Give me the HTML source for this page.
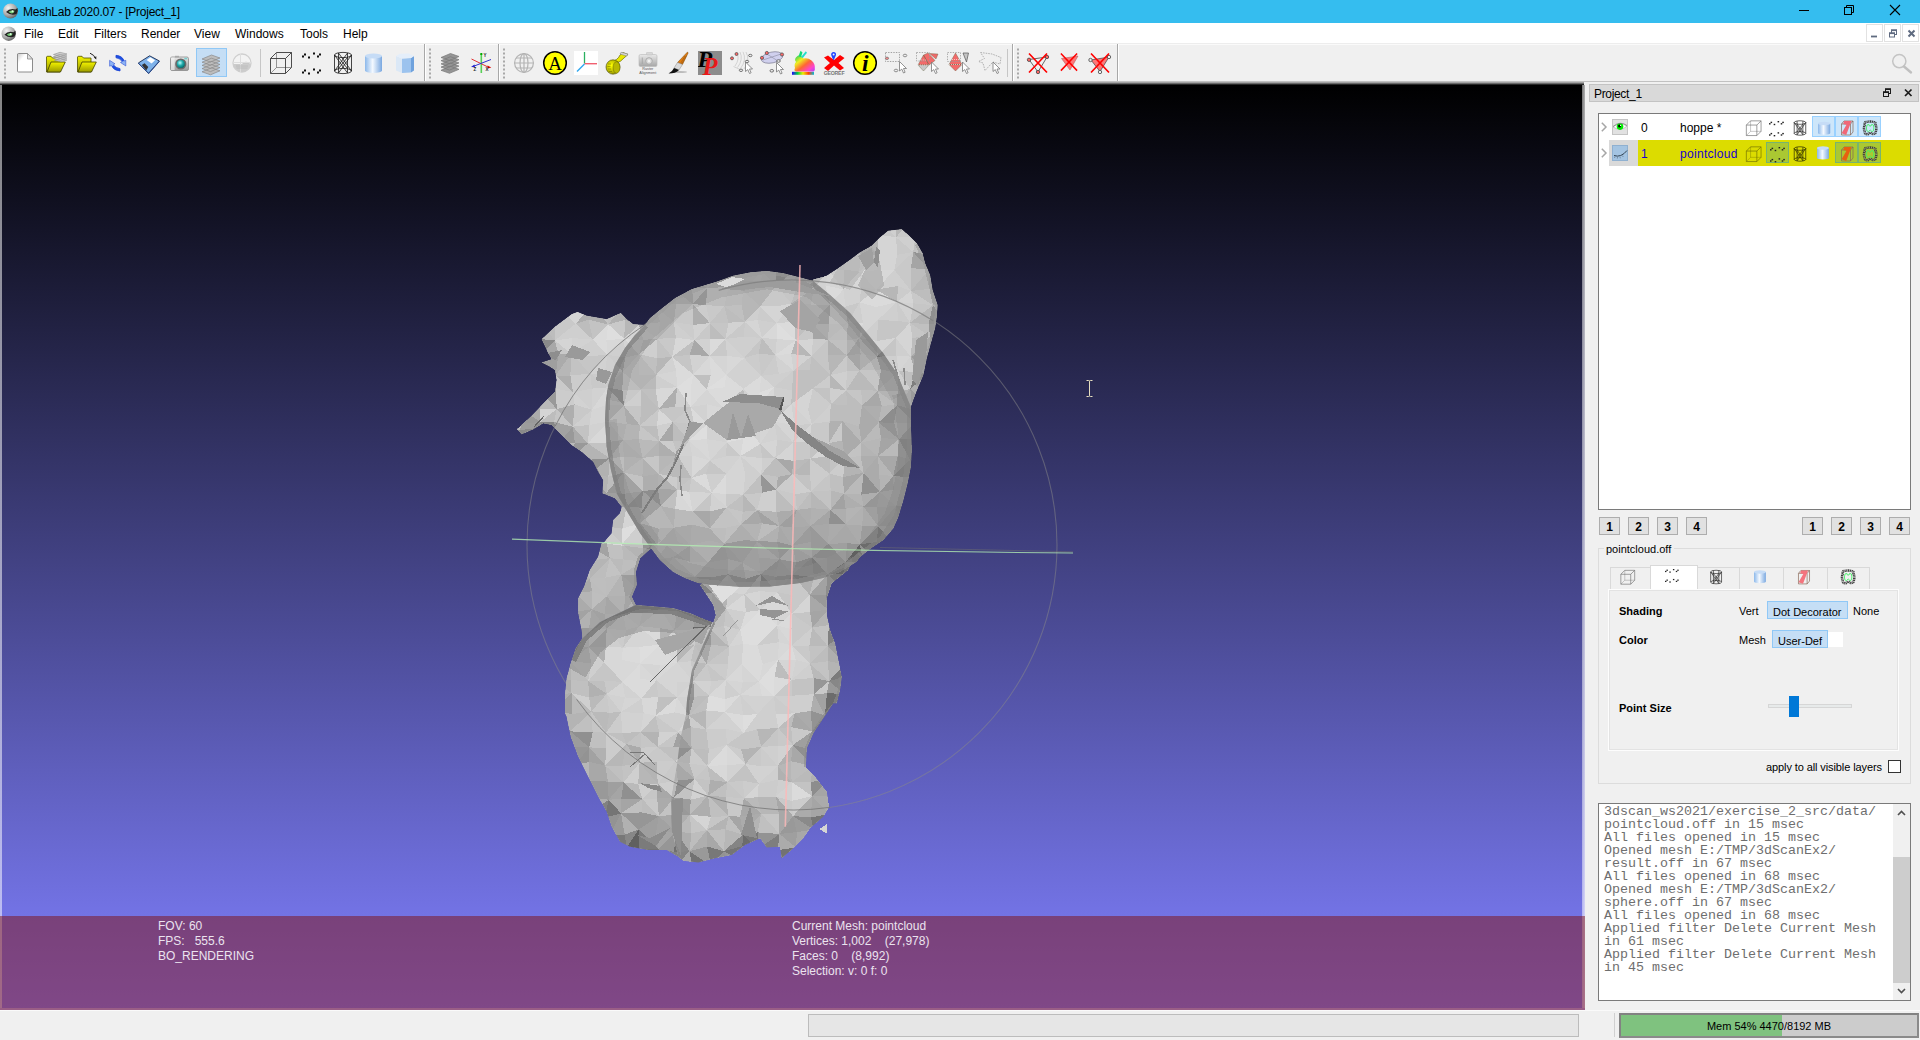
<!DOCTYPE html>
<html>
<head>
<meta charset="utf-8">
<title>MeshLab 2020.07 - [Project_1]</title>
<style>
*{box-sizing:border-box;margin:0;padding:0}
html,body{width:1920px;height:1040px;overflow:hidden;background:#f0f0f0;font-family:"Liberation Sans",sans-serif;font-size:12px;color:#000}
.abs{position:absolute}
#titlebar{position:absolute;left:0;top:0;width:1920px;height:23px;background:#35bdef}
#titlebar .t{position:absolute;left:23px;top:5px;font-size:12px;line-height:15px;white-space:nowrap;letter-spacing:-0.25px}
#menubar{position:absolute;left:0;top:23px;width:1920px;height:21px;background:#fff;border-bottom:1px solid #ededed}
#menubar span{position:absolute;top:4px;font-size:12px;line-height:15px;white-space:nowrap}
#toolbar{position:absolute;left:0;top:44px;width:1920px;height:38px;background:#f0f0f0;border-top:1px solid #fafafa}
#tbshadow{position:absolute;left:0;top:81px;width:1920px;height:4px;background:linear-gradient(#d0d0d0,#a0a0a0 40%,#404040 80%,#000)}
#viewport{position:absolute;left:2px;top:85px;width:1580px;height:925px;background:linear-gradient(#000000,#8080ff);overflow:hidden}
#info{position:absolute;left:0;top:831px;width:1580px;height:94px;background:rgba(128,16,16,0.5)}
#info div{position:absolute;white-space:nowrap;font-size:12px;line-height:15px;color:#ebe3ef}
#vpleft{position:absolute;left:0;top:85px;width:2px;height:925px;background:linear-gradient(rgba(255,255,255,.52),rgba(255,255,255,.52)),linear-gradient(#000,#8080ff)}
.vpov{position:absolute;left:0;top:831px;width:100%;height:94px;background:rgba(128,16,16,.5)}
#vpbot{position:absolute;left:0;top:1008px;width:1585px;height:2px;background:#9a5e86}
#vpright{position:absolute;left:1582px;top:85px;width:3px;height:925px;background:linear-gradient(90deg,rgba(255,255,255,.45),rgba(255,255,255,.7)),linear-gradient(#000,#8080ff)}
#rightbg{position:absolute;left:1584px;top:82px;width:336px;height:958px;background:#f0f0f0}
#status{position:absolute;left:0;top:1010px;border-top:1px solid #fafafa;width:1920px;height:30px;background:#f0f0f0}
</style>
</head>
<body>
<div id="titlebar"><div class="t">MeshLab 2020.07 - [Project_1]</div></div>
<div id="menubar">
<span style="left:24px">File</span><span style="left:58px">Edit</span><span style="left:94px">Filters</span><span style="left:141px">Render</span><span style="left:194px">View</span><span style="left:235px">Windows</span><span style="left:300px">Tools</span><span style="left:343px">Help</span>
</div>
<div id="toolbar"><!--TOOLBAR-->
<svg id="tbsvg" width="1920" height="38" viewBox="0 44 1920 38" style="position:absolute;left:0;top:-1px;overflow:visible">
<defs>
<linearGradient id="gFold" x1="0" y1="0" x2="0" y2="1"><stop offset="0" stop-color="#f4f400"/><stop offset="1" stop-color="#9a9a00"/></linearGradient>
<linearGradient id="gCyl" x1="0" y1="0" x2="1" y2="0"><stop offset="0" stop-color="#8cb8ea"/><stop offset=".45" stop-color="#f4f9ff"/><stop offset="1" stop-color="#7aa8e0"/></linearGradient>
<linearGradient id="gCam" x1="0" y1="0" x2="0" y2="1"><stop offset="0" stop-color="#e8e8e8"/><stop offset="1" stop-color="#9a9a9a"/></linearGradient>
<linearGradient id="gPage" x1="0" y1="0" x2="1" y2="1"><stop offset="0" stop-color="#c8c8c8"/><stop offset=".3" stop-color="#fff"/></linearGradient>
<linearGradient id="gRain" x1="0" y1="0" x2="1" y2="0"><stop offset="0" stop-color="#20f"/><stop offset=".25" stop-color="#0c4"/><stop offset=".5" stop-color="#ee0"/><stop offset=".75" stop-color="#f40"/><stop offset="1" stop-color="#0bd"/></linearGradient>
<linearGradient id="gBun" x1="0" y1="0" x2="1" y2="1"><stop offset="0" stop-color="#0c6"/><stop offset=".3" stop-color="#ee2"/><stop offset=".55" stop-color="#f63"/><stop offset=".8" stop-color="#f4c"/><stop offset="1" stop-color="#a4f"/></linearGradient>
<radialGradient id="gLens" cx=".4" cy=".35" r=".7"><stop offset="0" stop-color="#bff"/><stop offset=".5" stop-color="#2aa"/><stop offset="1" stop-color="#066"/></radialGradient>
<radialGradient id="gTape" cx=".4" cy=".4" r=".7"><stop offset="0" stop-color="#ff0"/><stop offset="1" stop-color="#8a8a00"/></radialGradient>
<g id="handle" fill="#a8a8a8"><rect x="0" y="0" width="2" height="2"/><rect x="0" y="4" width="2" height="2"/><rect x="0" y="8" width="2" height="2"/><rect x="0" y="12" width="2" height="2"/><rect x="0" y="16" width="2" height="2"/><rect x="0" y="20" width="2" height="2"/><rect x="0" y="24" width="2" height="2"/><rect x="0" y="28" width="2" height="2"/></g>
<g id="cursor"><path d="M0 0L0 9.5L2.3 7.6L4 11.5L5.6 10.8L4 7L7 7Z" fill="#fff" stroke="#777" stroke-width=".8"/></g>
<g id="icCube" fill="none" stroke-width=".9"><path d="M0.5 6.5H15.5V21.5H0.5Z M0.5 6.5L6.5 0.5H21.5L15.5 6.5 M21.5 0.5V15.5L15.5 21.5"/><path d="M6.5 0.5V15.5H21.5 M6.5 15.5L0.5 21.5" stroke-opacity=".55"/></g>
<g id="icDots"><rect x="2" y="1" width="2" height="2"/><rect x="0" y="3" width="2" height="2"/><rect x="6" y="4" width="2" height="2"/><rect x="11" y="0" width="2" height="2"/><rect x="15" y="3" width="2" height="2"/><rect x="17" y="1" width="2" height="2"/><rect x="2" y="17" width="2" height="2"/><rect x="0" y="19" width="2" height="2"/><rect x="6" y="20" width="2" height="2"/><rect x="11" y="16" width="2" height="2"/><rect x="15" y="19" width="2" height="2"/><rect x="17" y="17" width="2" height="2"/></g>
<g id="icWire" fill="none" stroke-width=".8"><ellipse cx="9" cy="3" rx="8.5" ry="2.6"/><ellipse cx="9" cy="19" rx="8.5" ry="2.6"/><path d="M0.5 3V19M17.5 3V19M4.500 1V21M13.500 1V21M0.5 3L13.500 21M17.5 3L4.500 21M4.500 1L17.5 19M13.500 1L0.5 19M4.500 5.4L13.500 16.6M13.500 5.4L4.500 16.6"/></g>
<g id="icCyl"><path d="M0 3V17.5A8.5 2.5 0 0 0 17 17.5V3Z" fill="url(#gCyl)"/><ellipse cx="8.5" cy="3" rx="8.5" ry="2.5" fill="#c6dcf6"/></g>
<g id="icFlat"><path d="M0 3V17.5L6 20V5.5Z" fill="#dbe8f6"/><path d="M6 5.5V20L15 19.5V5Z" fill="#9cc3ee"/><path d="M15 5V19.5L18 17.5V3Z" fill="#6fa2dd"/><path d="M0 3L4 .8L13 .5L18 3L15 5L6 5.5Z" fill="#e4eefa"/></g>
<g id="icLayers"><path d="M0 4L9.5 0L18 3L8.5 7Z M0 7.2L9.5 3.2L18 6.2L8.5 10.2Z M0 10.4L9.5 6.4L18 9.4L8.5 13.4Z M0 13.6L9.5 9.6L18 12.6L8.5 16.6Z M0 16.8L9.5 12.8L18 15.8L8.5 19.8Z" stroke-width=".7"/></g>
<g id="icGlobe" fill="none" stroke-width="1.2"><circle cx="10" cy="10" r="9.4"/><ellipse cx="10" cy="10" rx="4" ry="9.4"/><path d="M.6 10H19.4M10 .6V19.4M2 5H18M2 15H18"/></g>
<g id="delX" stroke="#f00" stroke-width="1.7" fill="none"><path d="M1 0L19 19M19 0L1 19"/></g>
</defs>
<!-- handles & separators -->
<use href="#handle" x="4" y="48.5"/><use href="#handle" x="429" y="48.5"/><use href="#handle" x="503" y="48.5"/><use href="#handle" x="1017" y="48.5"/>
<g stroke="#c6c6c6" stroke-width="1"><path d="M260.5 49V77M1007.5 49V77"/></g>
<g stroke="#a8a8a8" stroke-width="1"><path d="M424.5 44V81M498.5 44V81M1012.5 44V81M1117.5 44V81"/></g>
<g stroke="#fff" stroke-width="1"><path d="M425.5 44V81M499.5 44V81M1013.5 44V81M1118.5 44V81"/></g>
<!-- 1 new -->
<path d="M17.5 54A1 1 0 0 1 18.5 53.5H27.5L32.5 59V71A1 1 0 0 1 31.5 72H18.5A1 1 0 0 1 17.5 71Z" fill="url(#gPage)" stroke="#8c8c8c"/><path d="M27.5 53.5V59H32.5Z" fill="#e4e4e4" stroke="#8c8c8c" stroke-width=".8"/>
<!-- 2 open+layers -->
<g id="folder"><path d="M46.5 57A1 1 0 0 1 47.5 56.3H51L52.5 58H60V72H46.5Z" fill="url(#gFold)" stroke="#505000" stroke-width=".8"/><path d="M47 72L51 62H65.3L60.5 72Z" fill="url(#gFold)" stroke="#404000" stroke-width=".8"/></g>
<g fill="#d0d0d0" stroke="#909090" stroke-width=".6"><path d="M53.5 54.5L60 52.3L67 54L60.5 56.3Z M53.5 56.5L60 54.3L67 56L60.5 58.3Z M53.5 58.5L60 56.3L67 58L60.5 60.3Z M54.5 60.3L60 58.5L67 60L61 61.7Z"/></g>
<!-- 3 open+arrow -->
<use href="#folder" x="31"/><path d="M90 53.2Q94.5 55 95.5 58.5" fill="none" stroke="#222" stroke-width="1"/><path d="M94 57.5L96.3 59.5L96.3 56.3Z" fill="#222"/>
<!-- 4 reload -->
<g stroke="#1a3fd0" stroke-width=".5"><path d="M116 55.5Q122 56 124 61L125.8 60.3V66L120.5 62.5L122 61.8Q120.5 58.5 116 57.8Z" fill="#8eb4f4"/><path d="M116 55.3Q122 55.6 124 60.5L122.4 61.3Q120.5 58 116 57.5Z" fill="#1e50e0"/><path d="M120 70.8Q113.5 70.3 111.5 65.5L109.6 66.2V60.3L115 63.8L113.4 64.6Q115 67.8 120 68.6Z" fill="#8eb4f4"/><path d="M120 71Q114 70.5 112 66.5L113.8 65.5Q115.5 68 120 68.8Z" fill="#1e50e0"/></g>
<!-- 5 save -->
<path d="M138.3 63L149.6 55.8L159.4 61L148.6 73.3Z" fill="#7eb2ea" stroke="#1a2a50" stroke-width=".9"/><path d="M146.6 60L150.3 57.3L155 60.2L151.6 63.5Z" fill="#fff"/><path d="M141.8 65L144.6 63.3L148.3 67L146.2 70.4Z" fill="#333"/><path d="M138.3 63.3L148.6 73.6L159.4 61.4" fill="none" stroke="#2a4a90" stroke-width="1"/>
<!-- 6 camera -->
<rect x="170.5" y="57" width="18" height="13.5" rx="1.6" fill="url(#gCam)" stroke="#8a8a8a" stroke-width=".8"/><rect x="171" y="57.5" width="3.6" height="12.5" fill="#f4f4f4" opacity=".7"/><rect x="175" y="55.8" width="4" height="1.6" fill="#aaa"/><rect x="184.3" y="57.8" width="3" height="1.6" fill="#7cc"/><circle cx="180.8" cy="64" r="5.6" fill="#6a6a6a"/><circle cx="180.8" cy="64" r="4" fill="url(#gLens)"/>
<!-- 7 layers highlighted -->
<rect x="196.5" y="48.5" width="30" height="28" fill="#c5def5" stroke="#90c8f6"/>
<use href="#icLayers" x="202" y="55" fill="#bdbdbd" stroke="#8a8a8a"/>
<!-- 8 globe faded -->
<g opacity=".75"><circle cx="242" cy="63" r="9" fill="#f4f4f4" stroke="#c4c4c4" stroke-width="1.3"/><path d="M233.5 64H250.5V66Q248 71.5 242 72Q236 71.5 233.5 66Z" fill="#c0c0c0"/><path d="M243 63Q246 60.5 249 63L250.5 64H242Z" fill="#bbb"/><path d="M240.5 54V72M233 62.5H251" stroke="#d8d8d8" stroke-width="1" fill="none"/><path d="M236 66H248M236.5 68H247.5" stroke="#a8a8a8" stroke-width=".8"/></g>
<!-- 9-13 render modes -->
<use href="#icCube" x="270" y="52" stroke="#3a3a3a"/>
<use href="#icDots" x="302" y="52.5" fill="#111"/>
<use href="#icWire" x="334" y="52" stroke="#1a1a1a"/>
<use href="#icCyl" x="365" y="53"/>
<use href="#icFlat" x="396" y="53"/>
<!-- 14 grey layers -->
<g opacity=".9"><use href="#icLayers" x="441" y="53.5" fill="#8c8c8c" stroke="#6a6a6a"/></g>
<!-- 15 axes -->
<path d="M481.3 54V73" stroke="#58d058" stroke-width="1.6"/><path d="M471.5 59L489 67.5" stroke="#e03030" stroke-width="1"/><path d="M491 59.5L473 66.5" stroke="#3030d0" stroke-width="1"/><path d="M487.5 65.5L491.3 67.5L488 68.5Z" fill="#d00"/><path d="M474.5 64.5L471 67L475 67.3Z" fill="#22c"/><rect x="480.3" y="53" width="2" height="2" fill="#0a0"/>
<g font-family="Liberation Sans" font-size="4.5" font-weight="bold" fill="#222"><text x="483.5" y="57">Y</text><text x="473.5" y="70.5">Z</text><text x="485.5" y="70.5">X</text></g>
<!-- 16 globe -->
<use href="#icGlobe" x="514" y="53" stroke="#b4b4b4"/>
<!-- 17 A -->
<circle cx="555" cy="63" r="11.3" fill="#ff0" stroke="#000" stroke-width="1.5"/><text x="555" y="69.6" font-family="Liberation Serif" font-size="19" text-anchor="middle" fill="#000">A</text>
<!-- 18 axes box -->
<rect x="574" y="51" width="24" height="24" fill="#fff"/><path d="M584.5 52V63.5" stroke="#2ab060" stroke-width="1.3"/><path d="M584.5 63.7H597" stroke="#f06070" stroke-width="1.4"/><path d="M584.5 64L577 71.5" stroke="#30a8f0" stroke-width="1.4"/>
<!-- 19 tape -->
<path d="M611 62Q618 60 620 55L623 52.5L628 54.5L624 58Q621 62 615 63.5Z" fill="#e8e800" stroke="#555500" stroke-width=".6"/><path d="M621 52.3L628 54L626.5 56L620 54Z" fill="#d8d8d8" stroke="#777" stroke-width=".5"/><ellipse cx="613" cy="67" rx="7" ry="7.2" fill="url(#gTape)" stroke="#444400" stroke-width=".6"/><ellipse cx="616.5" cy="67.5" rx="3.4" ry="5.8" fill="#b8b800" stroke="#666600" stroke-width=".5"/><path d="M608 64H611M607.5 66.5H610.5M608 69H611M609 71.5H612" stroke="#666600" stroke-width=".5"/>
<!-- 20 raster camera -->
<g opacity=".85"><rect x="639" y="54.5" width="18" height="12" rx="1.6" fill="url(#gCam)" stroke="#b0b0b0" stroke-width=".6"/><rect x="646.5" y="52.3" width="6" height="2.6" rx=".8" fill="#d4d4d4" stroke="#b4b4b4" stroke-width=".5"/><circle cx="649" cy="61" r="3.3" fill="#d8d8d8" stroke="#a0a0a0" stroke-width="1"/><circle cx="649" cy="61" r="1.2" fill="#f4f4f4"/><path d="M642.3 57.5V64" stroke="#999" stroke-width=".9"/></g>
<g font-family="Liberation Sans" font-size="3.8" fill="#555" text-anchor="middle"><text x="647.8" y="70">Raster</text><text x="647.8" y="74.2">Alignment</text></g>
<!-- 21 brush -->
<ellipse cx="680" cy="72" rx="7" ry="1.1" fill="#bbb"/><path d="M687.3 52.2Q688.3 52 688 53.2L682.5 64.5L677.5 62.5Z" fill="#e07c10" stroke="#7a4a10" stroke-width=".5"/><path d="M685 56L680.5 63.6M686.5 55.5L681.7 64" stroke="#8a5010" stroke-width=".5"/><path d="M677.5 62.5L682.5 64.5L679 70L674 68Z" fill="#dadada" stroke="#888" stroke-width=".5"/><path d="M674 68L679 70Q676 73.5 668.5 73.6Q672.5 71.5 674 68Z" fill="#111"/>
<!-- 22 PP -->
<clipPath id="cpPP"><rect x="698" y="51" width="24" height="24"/></clipPath><rect x="698" y="51" width="24" height="24" fill="#8c8c8c"/><g font-family="Liberation Serif" font-weight="bold" font-style="italic" clip-path="url(#cpPP)"><text x="697.500" y="67.3" font-size="24" fill="#000">P</text><text x="702.5" y="74.8" font-size="24.5" fill="#e81818">P</text></g>
<!-- 23 select vertex -->
<g fill="none" stroke="#c4c4c4" stroke-width=".7"><path d="M737 52.5Q740 59 735 66M740 52Q743.5 59.5 737.5 67.5M743 51.8Q747 60 740.5 68.5M746 52Q750.5 60 744 69M733.5 66.5Q737 68 740 69.5"/></g>
<g stroke="#555" stroke-width=".8"><circle cx="736.5" cy="54" r="1.5" fill="#f66"/><circle cx="732" cy="58.3" r="1.5" fill="#f66"/><ellipse cx="750.3" cy="55.5" rx="1.7" ry="1.2" fill="#eee"/><ellipse cx="747" cy="61.5" rx="1.7" ry="1.2" fill="#eee"/><ellipse cx="741" cy="70.3" rx="1.7" ry="1.2" fill="#eee"/></g>
<use href="#cursor" x="745.5" y="62"/>
<!-- 24 select connected -->
<ellipse cx="772" cy="57.5" rx="11" ry="5.4" transform="rotate(-12 772 57.5)" fill="#d0d0ee" stroke="#8a8aa0" stroke-width=".8"/><path d="M763 60L781 54M766 53.5L778 61" stroke="#8a8aa0" stroke-width=".6"/>
<g stroke="#555" stroke-width=".8"><circle cx="766.8" cy="53" r="1.6" fill="#f66"/><circle cx="762" cy="57.8" r="1.6" fill="#f66"/><circle cx="782" cy="54.5" r="1.6" fill="#f66"/><ellipse cx="778.5" cy="61" rx="1.8" ry="1.3" fill="#eee"/><ellipse cx="771.8" cy="70.8" rx="1.8" ry="1.3" fill="#eee"/></g>
<use href="#cursor" x="776.5" y="62.5"/>
<!-- 25 bunny -->
<rect x="792" y="71.8" width="22" height="3" fill="url(#gRain)"/><path d="M797.5 56Q799.5 54.500 801.500 56L803.500 58.500Q808 57.500 811.500 60.500Q815.500 64 814.800 68.500Q815.500 70.500 813.500 71.500H796Q793.500 71 795 68Q793.800 64.500 796 62Q793.500 59 797.500 56Z" fill="url(#gBun)"/><path d="M798.500 56.500L800.500 50.800L802.500 52.500L801 57Z" fill="#1d7"/><path d="M801 57L805.800 51.300L807 52.800L802.800 58Z" fill="#2dc"/>
<!-- 26 georef -->
<path d="M824 57.5L828 55.5L834 60L840 55L844.5 58L838.5 63L844 68L840 70.5L834 65.5L828 71L824 68L830 63Z" fill="#f00"/><path d="M833.5 52A2.4 2.4 0 0 1 836 55Q835 57.5 833.6 60.5Q832 57.5 831.2 55A2.4 2.4 0 0 1 833.5 52Z" fill="#24f"/><circle cx="833.6" cy="54.5" r="1" fill="#eef"/>
<text x="834" y="75.3" font-family="Liberation Sans" font-size="5.2" font-weight="bold" fill="#777" text-anchor="middle" letter-spacing="-.2">GEOREF</text>
<!-- 27 info -->
<circle cx="865" cy="63" r="11.3" fill="#ff0" stroke="#000" stroke-width="1.5"/><text x="865.3" y="71" font-family="Liberation Serif" font-size="23.5" font-weight="bold" font-style="italic" text-anchor="middle" fill="#000">i</text>
<!-- 28 select rect faded -->
<rect x="885.5" y="52.5" width="14" height="9" fill="none" stroke="#999" stroke-width=".9" stroke-dasharray="1.4 1.2"/><g stroke="#777" stroke-width=".8"><ellipse cx="887" cy="58.3" rx="1.6" ry="1.2" fill="#f88"/><ellipse cx="905" cy="55.5" rx="1.8" ry="1.3" fill="#eee"/><ellipse cx="896" cy="70.5" rx="1.8" ry="1.3" fill="#eee"/></g><use href="#cursor" x="899.5" y="61.5"/>
<!-- 29 select faces -->
<g stroke="#664" stroke-width=".4"><path d="M918 65L923.5 55L929 65Z M923.5 55L929 65L935 60.5L928 53Z" fill="#f26a6a"/><path d="M918 65L929 65L923.5 71Z" fill="#c8c8c8"/><path d="M929.5 53.5L938 54L936 59Z" fill="#ee6a6a"/><path d="M920.8 60H926.3M918 65H929" stroke="#fff" stroke-width=".6" stroke-dasharray="1 1"/></g><rect x="916.5" y="52.5" width="13" height="8.5" fill="none" stroke="#999" stroke-width=".8" stroke-dasharray="1.4 1.2"/><use href="#cursor" x="931.5" y="62"/>
<!-- 30 select faces 2 -->
<g stroke="#664" stroke-width=".4"><path d="M949 64.5L955.5 53L962 64.5Z M949 64.5L962 64.5L955.5 71Z" fill="#f26a6a"/><path d="M963 53L968.5 53L966.5 62Z" fill="#c4c4c4" stroke="#555" stroke-width=".7"/><path d="M952 59.5H959M949 64.5H962" stroke="#fff" stroke-width=".6" stroke-dasharray="1 1"/></g><rect x="947.5" y="52.5" width="13" height="9" fill="none" stroke="#999" stroke-width=".8" stroke-dasharray="1.4 1.2"/><use href="#cursor" x="962.5" y="62"/>
<!-- 31 polyline -->
<path d="M980.5 52.5L992 54L1001 57.5L1000 64L993 62L985 70.5L983 63L978.5 61.5L984.5 58.5Z" fill="none" stroke="#aaa" stroke-width=".9" stroke-dasharray="1.6 1"/><use href="#cursor" x="993" y="62"/>
<!-- delete icons -->
<path d="M1029 59.5L1047 57L1038 72Z" fill="none" stroke="#444" stroke-width=".8"/><g stroke="#444" stroke-width=".8" fill="#f66"><circle cx="1029" cy="59.8" r="1.7"/><circle cx="1047" cy="57" r="1.7"/><circle cx="1038" cy="72" r="1.7"/></g><use href="#delX" x="1028" y="53.5"/>
<path d="M1061.5 58.5L1078 56L1070 70Z" fill="#f77" stroke="#a55" stroke-width=".5"/><use href="#delX" x="1060" y="53.5" transform="translate(106 5.35) scale(.9)"/>
<path d="M1091 60L1109 57L1100 71.5Z" fill="#f77" stroke="#444" stroke-width=".7"/><g stroke="#444" stroke-width=".8" fill="#eee"><circle cx="1090.5" cy="60" r="1.7"/><circle cx="1109" cy="57" r="1.7"/><circle cx="1100" cy="72" r="1.7"/></g><use href="#delX" x="1090" y="53.5"/>
<!-- search -->
<circle cx="1899.3" cy="61.2" r="6.6" fill="none" stroke="#c4c4c4" stroke-width="1.5"/><path d="M1904 66.5L1911 72.5" stroke="#c0c0c0" stroke-width="2.4" stroke-linecap="round"/>
</svg>

<!--/TOOLBAR--></div>
<div id="tbshadow"></div>
<div id="rightbg"></div>
<div id="vpleft"><div class="vpov"></div></div><div id="vpright"><div class="vpov"></div></div>
<div id="viewport">
<!--MESH-->
<svg id="mesh" width="1580" height="924" viewBox="0 0 1580 924" style="position:absolute;left:0;top:0" shape-rendering="crispEdges">
<defs>
<clipPath id="c_lear"><path d="M643.0 240.0L631.3 239.2L624.7 234.2L618.8 228.0L604.7 234.2L584.7 230.8L575.5 227.0L569.7 229.2L553.0 241.7L539.7 254.2L546.3 268.3L549.7 274.2L539.7 277.5L548.0 281.7L553.0 285.0L554.7 295.0L553.0 306.7L543.0 316.7L529.7 330.8L514.7 344.2L519.7 349.2L531.3 344.2L541.3 338.3L549.7 340.0L559.7 350.0L569.7 360.0L579.7 366.7L591.3 376.7L596.3 386.7L601.3 395.0L600.5 408.3L613.0 413.3L619.7 421.7L618.0 428.3L611.3 435.0L609.7 448.3L601.3 458.3L599.7 458.3L596.3 471.7L588.0 485.0L582.2 501.7L576.3 513.3L576.3 528.3L579.7 545.0L580.5 553.3L598.0 537.0L633.8 520.0L629.7 511.7L634.7 500.0L633.8 486.7L638.0 473.3L648.0 464.2L668.0 455.0L678.0 345.0L663.0 245.0z"/></clipPath>
<clipPath id="c_rear"><path d="M811.3 194.2L824.7 190.8L836.3 183.3L848.0 175.0L858.0 167.5L869.7 160.8L878.0 152.5L886.3 145.8L899.7 144.2L906.3 150.0L914.7 158.3L920.5 168.3L923.0 178.3L928.0 190.0L930.5 205.0L935.5 220.0L934.7 231.7L933.0 243.3L928.8 258.3L924.7 273.3L921.3 290.0L916.3 301.7L913.8 308.0L908.8 321.7L878.0 315.0L838.0 245.0L803.0 215.0z"/></clipPath>
<clipPath id="c_body"><path d="M633.8 520.0L654.7 521.7L671.3 523.3L688.0 528.3L704.7 535.0L711.3 537.5L713.8 530.0L711.3 520.0L704.7 510.0L698.0 500.0L718.0 485.0L798.0 480.0L849.0 478.5L846.3 485.0L829.7 498.3L824.7 513.3L824.7 530.0L828.0 545.0L833.0 558.3L836.3 575.0L839.7 591.7L838.0 605.0L834.7 618.3L831.3 618.3L821.3 633.3L811.3 648.3L804.7 663.3L803.8 682.5L813.0 691.7L824.7 706.7L827.2 721.7L821.3 731.7L808.0 743.3L801.3 753.3L791.3 763.3L779.7 773.3L778.0 761.7L764.7 762.5L758.0 753.3L743.0 760.0L729.7 770.0L713.0 773.3L696.3 777.5L681.3 775.8L676.3 771.7L664.7 765.0L646.3 765.0L628.0 761.7L618.0 756.7L609.7 741.7L604.7 726.7L596.3 711.7L586.3 691.7L576.3 671.7L568.8 651.7L564.7 631.7L563.0 628.0L563.0 610.0L564.7 593.3L568.8 578.3L573.8 563.3L580.5 553.3L598.0 537.0z"/></clipPath>
<clipPath id="c_chest"><path d="M711.3 537.5L713.8 530.0L711.3 520.0L704.7 510.0L698.0 500.0L718.0 485.0L798.0 480.0L849.0 478.5L846.3 485.0L829.7 498.3L824.7 513.3L824.7 530.0L828.0 545.0L833.0 558.3L836.3 575.0L839.7 591.7L838.0 605.0L834.7 618.3L831.3 618.3L821.3 633.3L811.3 648.3L804.7 663.3L803.8 682.5L813.0 691.7L824.7 706.7L827.2 721.7L821.3 731.7L808.0 743.3L801.3 753.3L791.3 763.3L779.7 773.3L778.0 761.7L764.7 762.5L758.0 753.3L743.0 760.0L729.7 770.0L713.0 773.3L696.3 777.5L681.3 775.8L676.3 771.7L670.0 747.0L669.0 715.0L675.0 680.0L678.0 655.0L684.0 630.0L685.0 615.0L690.0 585.0L701.0 560.0z"/></clipPath>
<clipPath id="c_head"><path d="M643.0 240.0L648.0 233.3L658.0 225.0L673.0 213.3L689.7 204.2L714.7 196.7L731.3 190.8L748.0 187.5L764.7 186.0L781.3 188.3L798.0 192.5L811.0 196.0L828.0 210.0L848.0 228.0L864.7 248.0L881.0 268.0L894.7 288.0L903.0 308.0L908.8 321.7L909.0 345.0L909.7 365.0L908.8 381.7L905.5 398.3L901.3 415.0L896.3 431.7L891.3 443.3L881.3 455.0L868.0 464.0L858.0 472.0L854.7 476.7L838.0 487.0L821.0 493.0L798.0 498.0L768.0 501.5L738.0 501.7L713.0 500.0L696.0 498.0L683.0 493.0L671.0 486.7L658.0 475.0L648.0 461.7L638.0 448.0L631.3 436.7L623.0 423.0L614.7 408.3L609.0 385.0L604.7 361.7L603.0 335.0L604.0 315.0L606.3 300.0L613.0 280.0L623.0 263.0L633.0 250.0z"/></clipPath>
</defs>
<g shape-rendering="auto"><circle cx="790.0" cy="460.0" r="265.0" fill="none" stroke="#8a8a8a" stroke-opacity=".5" stroke-width="1.1"/></g>
<g clip-path="url(#c_lear)">
<path d="M643.0 240.0L631.3 239.2L624.7 234.2L618.8 228.0L604.7 234.2L584.7 230.8L575.5 227.0L569.7 229.2L553.0 241.7L539.7 254.2L546.3 268.3L549.7 274.2L539.7 277.5L548.0 281.7L553.0 285.0L554.7 295.0L553.0 306.7L543.0 316.7L529.7 330.8L514.7 344.2L519.7 349.2L531.3 344.2L541.3 338.3L549.7 340.0L559.7 350.0L569.7 360.0L579.7 366.7L591.3 376.7L596.3 386.7L601.3 395.0L600.5 408.3L613.0 413.3L619.7 421.7L618.0 428.3L611.3 435.0L609.7 448.3L601.3 458.3L599.7 458.3L596.3 471.7L588.0 485.0L582.2 501.7L576.3 513.3L576.3 528.3L579.7 545.0L580.5 553.3L598.0 537.0L633.8 520.0L629.7 511.7L634.7 500.0L633.8 486.7L638.0 473.3L648.0 464.2L668.0 455.0L678.0 345.0L663.0 245.0z" fill="#bcbcbc"/>
<path fill="#878787" d="M538.2 337.1L552.1 337L556.5 359z"/>
<path fill="#8a8a8a" d="M534.4 253.6L552.8 255.5L539.2 269.2zM570.5 542.9L587 542.9L586.5 562.2z"/>
<path fill="#909090" d="M538.2 337.1L537.8 357.1L517.3 355.8zM538.2 337.1L556.5 359L537.8 357.1zM586.2 374.8L607.8 373.3L586.5 389.6zM619.2 489.5L641.7 489.5L637.4 506.3z"/>
<path fill="#939393" d="M539.8 290.2L553.6 290.5L539.1 306.5zM604.4 407.9L607.1 423.6L589.7 421.2zM640.6 459.5L655.5 460L640.8 476.7zM587 542.9L604.7 544L586.5 562.2z"/>
<path fill="#969696" d="M553.6 290.5L554 303.7L539.1 306.5zM621.6 387.6L622.8 408.7L604.4 407.9zM619.2 489.5L637.4 506.3L623.4 511.4z"/>
<path fill="#999999" d="M539.1 306.5L554 303.7L554.7 324zM517.1 321.8L538.2 337.1L519 338.5zM570.8 341.6L572.9 358L556.5 359zM572.9 358L585.9 358.4L568.4 373.3z"/>
<path fill="#9c9c9c" d="M539.2 269.2L553.6 290.5L539.8 290.2zM519 338.5L538.2 337.1L517.3 355.8zM604.4 407.9L624.6 421.4L607.1 423.6zM589.8 524.3L602.5 529L604.7 544z"/>
<path fill="#9f9f9f" d="M539.2 269.2L556.5 268.6L553.6 290.5zM586.5 389.6L604.4 407.9L588.7 404.6zM604.4 407.9L622.8 408.7L624.6 421.4zM586.3 460.6L604.6 458.2L607.8 473.2zM570.3 527.2L589.8 524.3L570.5 542.9z"/>
<path fill="#a2a2a2" d="M623.4 218.7L636.9 239.7L623.5 234.9zM552.1 337L570.8 341.6L556.5 359zM588.7 404.6L604.4 407.9L589.7 421.2zM623.4 511.4L637.4 506.3L621.3 528.9zM589.8 524.3L604.7 544L587 542.9z"/>
<path fill="#a5a5a5" d="M604.6 511.5L621.3 528.9L602.5 529z"/>
<path fill="#a8a8a8" d="M636.9 239.7L658.1 237.3L655.4 253.8zM552.8 255.5L556.5 268.6L539.2 269.2zM587.9 493.8L590 506.4L572.9 507.5z"/>
<path fill="#ababab" d="M636.9 239.7L655.4 253.8L641.5 254.9zM556.5 268.6L569.1 268.7L553.6 290.5zM517.1 321.8L538 323.7L538.2 337.1zM570.8 341.6L585.9 358.4L572.9 358zM602.5 529L621.3 528.9L604.7 544z"/>
<path fill="#aeaeae" d="M590 220.5L586.6 234.8L573.7 238.7zM590 220.5L606.2 239.4L586.6 234.8zM653.5 221.1L658.1 237.3L636.9 239.7zM553.6 290.5L568.4 290.5L571 307.2zM554.7 324L572.6 319.4L570.8 341.6zM572.9 507.5L589.8 524.3L570.3 527.2z"/>
<path fill="#b1b1b1" d="M623.4 218.7L623.5 234.9L606.2 239.4zM623.4 218.7L640.8 221.2L636.9 239.7zM640.8 221.2L653.5 221.1L636.9 239.7zM607.8 373.3L606.4 391.8L586.5 389.6zM604.6 511.5L602.5 529L589.8 524.3z"/>
<path fill="#b4b4b4" d="M585.9 358.4L586.2 374.8L568.4 373.3zM585.9 358.4L607.8 373.3L586.2 374.8zM586.5 389.6L606.4 391.8L604.4 407.9z"/>
<path fill="#b7b7b7" d="M623.5 234.9L636.9 239.7L622 253.7zM569.1 268.7L568.4 290.5L553.6 290.5zM539.1 306.5L538 323.7L517.1 321.8z"/>
<path fill="#bababa" d="M538.5 237.3L552.8 255.5L534.4 253.6zM539.1 306.5L554.7 324L538 323.7zM556.5 359L572.9 358L568.4 373.3zM638 438.1L655.5 460L640.6 459.5zM571.1 491.3L587.9 493.8L572.9 507.5zM604.6 511.5L623.4 511.4L621.3 528.9z"/>
<path fill="#bdbdbd" d="M538.5 237.3L552.7 235L552.8 255.5zM573.7 238.7L586.6 234.8L590.9 254.7zM554.7 324L552.1 337L538.2 337.1zM606.4 391.8L621.6 387.6L604.4 407.9zM624.6 421.4L620.4 443.8L604.2 441.2zM589.8 524.3L587 542.9L570.5 542.9z"/>
<path fill="#c0c0c0" d="M604 217.1L623.4 218.7L606.2 239.4zM620.1 459.3L640.6 459.5L640.8 476.7zM570.3 475.7L587.9 493.8L571.1 491.3zM619.2 489.5L623.4 511.4L604.6 511.5z"/>
<path fill="#c3c3c3" d="M590 220.5L604 217.1L606.2 239.4zM586.6 234.8L606.2 239.4L590.9 254.7zM569.1 268.7L588.3 288.6L568.4 290.5zM570.8 341.6L587.5 339.9L585.9 358.4zM585.9 358.4L603.8 357.5L607.8 373.3zM607.8 373.3L621.6 387.6L606.4 391.8zM588.1 475.7L607.8 473.2L587.9 493.8zM640.8 476.7L641.7 489.5L619.2 489.5zM572.9 507.5L590 506.4L589.8 524.3z"/>
<path fill="#c6c6c6" d="M569.1 268.7L585.4 271.5L588.3 288.6zM585.4 271.5L605.3 269.7L588.3 288.6zM554.7 324L570.8 341.6L552.1 337zM604.2 441.2L620.4 443.8L620.1 459.3z"/>
<path fill="#c9c9c9" d="M551.9 219.2L573.7 238.7L552.7 235zM552.7 235L573.7 238.7L552.8 255.5zM606.2 239.4L623.5 234.9L622 253.7zM552.8 255.5L569.1 268.7L556.5 268.6zM553.6 290.5L571 307.2L554 303.7zM588.3 288.6L605.5 302.4L589.9 303.6zM602.7 289.7L620.8 286.9L605.5 302.4zM572.6 319.4L589.8 324.8L570.8 341.6zM604.2 441.2L604.6 458.2L586.3 460.6z"/>
<path fill="#cccccc" d="M605.3 269.7L623.3 272.6L620.8 286.9zM568.4 290.5L588.3 288.6L571 307.2zM588.3 288.6L589.9 303.6L571 307.2zM588.3 288.6L602.7 289.7L605.5 302.4zM554 303.7L571 307.2L554.7 324zM571 307.2L572.6 319.4L554.7 324zM604.2 441.2L620.1 459.3L604.6 458.2zM620.1 459.3L640.8 476.7L621.2 474.4z"/>
<path fill="#cfcfcf" d="M573.7 238.7L570.1 253L552.8 255.5zM573.7 238.7L590.9 254.7L570.1 253zM590.9 254.7L585.4 271.5L569.1 268.7zM590.9 254.7L605.3 269.7L585.4 271.5zM622 253.7L623.3 272.6L605.3 269.7zM605.3 269.7L620.8 286.9L602.7 289.7zM571 307.2L589.9 303.6L589.8 324.8zM589.8 324.8L587.5 339.9L570.8 341.6zM638 438.1L640.6 459.5L620.1 459.3zM607.8 473.2L621.2 474.4L619.2 489.5z"/>
<path fill="#d2d2d2" d="M570.1 253L590.9 254.7L569.1 268.7zM605.3 269.7L602.7 289.7L588.3 288.6zM571 307.2L589.8 324.8L572.6 319.4zM589.9 303.6L605.5 302.4L589.8 324.8zM587.5 339.9L606.2 336.6L585.9 358.4zM586.3 460.6L607.8 473.2L588.1 475.7zM570.3 475.7L588.1 475.7L587.9 493.8zM607.8 473.2L603.3 492.6L587.9 493.8zM587.9 493.8L604.6 511.5L590 506.4zM603.3 492.6L619.2 489.5L604.6 511.5z"/>
<path fill="#d5d5d5" d="M551.9 219.2L572.2 220.6L573.7 238.7zM572.2 220.6L590 220.5L573.7 238.7zM636.9 239.7L641.5 254.9L622 253.7zM552.8 255.5L570.1 253L569.1 268.7zM622 253.7L637.1 269.3L623.3 272.6zM538 323.7L554.7 324L538.2 337.1zM589.8 324.8L606.2 319.6L606.2 336.6zM589.8 324.8L606.2 336.6L587.5 339.9zM624.6 421.4L638 438.1L620.4 443.8zM621.2 474.4L640.8 476.7L619.2 489.5zM587.9 493.8L603.3 492.6L604.6 511.5zM590 506.4L604.6 511.5L589.8 524.3z"/>
<path fill="#d8d8d8" d="M604.4 255.3L622 253.7L605.3 269.7zM605.5 302.4L606.2 319.6L589.8 324.8zM606.2 336.6L603.8 357.5L585.9 358.4z"/>
<path fill="#dbdbdb" d="M606.2 239.4L604.4 255.3L590.9 254.7zM590.9 254.7L604.4 255.3L605.3 269.7zM604.6 458.2L620.1 459.3L607.8 473.2zM620.1 459.3L621.2 474.4L607.8 473.2z"/>
<path fill="#dedede" d="M606.2 239.4L622 253.7L604.4 255.3zM622 253.7L641.5 254.9L637.1 269.3zM620.4 443.8L638 438.1L620.1 459.3zM607.8 473.2L619.2 489.5L603.3 492.6z"/>
<polyline points="650.0,463.0 638.0,473.0 634.0,487.0 635.0,500.0 630.0,512.0 634.0,521.0" fill="none" stroke="#777" stroke-width="5" stroke-opacity=".7"/><polygon points="599.0,458.0 648.0,464.0 634.0,520.0 598.0,537.0 580.0,553.0 576.0,515.0 588.0,485.0" fill="#a8a8a8" fill-opacity=".5"/><polygon points="546.0,268.0 560.0,265.0 554.0,275.0 550.0,274.0" fill="#8e8e8e"/><polygon points="570.0,260.0 588.0,267.0 581.0,275.0 563.0,272.0" fill="#9a9a9a"/><polygon points="596.0,283.0 610.0,287.0 604.0,299.0 594.0,295.0" fill="#999"/><polygon points="515.0,345.0 531.0,344.0 520.0,349.0" fill="#8a8a8a"/><polyline points="532.0,342.0 542.0,331.0" fill="none" stroke="#666" stroke-width="1.2"/><polygon points="570.0,361.0 592.0,377.0 601.0,395.0 588.0,385.0" fill="#888"/>
</g>
<g clip-path="url(#c_rear)">
<path d="M811.3 194.2L824.7 190.8L836.3 183.3L848.0 175.0L858.0 167.5L869.7 160.8L878.0 152.5L886.3 145.8L899.7 144.2L906.3 150.0L914.7 158.3L920.5 168.3L923.0 178.3L928.0 190.0L930.5 205.0L935.5 220.0L934.7 231.7L933.0 243.3L928.8 258.3L924.7 273.3L921.3 290.0L916.3 301.7L913.8 308.0L908.8 321.7L878.0 315.0L838.0 245.0L803.0 215.0z" fill="#bcbcbc"/>
<path fill="#7e7e7e" d="M912.9 286.8L926.1 288.3L908.3 304.2z"/>
<path fill="#8a8a8a" d="M928 251.7L945 256.1L943.9 273.2z"/>
<path fill="#909090" d="M930.9 220.2L943.8 237L926.7 239.2z"/>
<path fill="#939393" d="M911.2 167L928.6 170.2L927.2 184.5zM943.8 237L945 256.1L928 251.7z"/>
<path fill="#969696" d="M926.7 239.2L943.8 237L928 251.7z"/>
<path fill="#9c9c9c" d="M859.5 154.1L875.5 170.2L858.3 170.1zM908.7 271.6L927.3 269.9L926.1 288.3zM908.3 304.2L927.6 322.6L910.2 324.4z"/>
<path fill="#9f9f9f" d="M927.5 203.9L942.2 200.7L930.9 220.2zM928 251.7L943.9 273.2L927.3 269.9z"/>
<path fill="#a5a5a5" d="M911.2 167L927.2 184.5L909 183.1zM927.2 184.5L942.2 200.7L927.5 203.9zM942.2 200.7L944.6 221L930.9 220.2z"/>
<path fill="#a8a8a8" d="M908.3 304.2L910.2 324.4L895.1 320.2z"/>
<path fill="#ababab" d="M928 251.7L927.3 269.9L908.7 271.6zM908.7 271.6L926.1 288.3L912.9 286.8z"/>
<path fill="#aeaeae" d="M926.1 288.3L930.7 305.8L908.3 304.2zM908.3 304.2L930.7 305.8L927.6 322.6z"/>
<path fill="#b1b1b1" d="M841.9 184.5L857.3 186.7L841.3 204.4zM930.9 220.2L944.6 221L943.8 237zM895.6 306.1L908.3 304.2L895.1 320.2z"/>
<path fill="#b4b4b4" d="M859.5 154.1L876.5 149.6L875.5 170.2z"/>
<path fill="#b7b7b7" d="M893.2 137.1L910.1 132L894.2 152.4zM927.2 184.5L927.5 203.9L909 205.9zM874.1 204.7L895.9 201.1L895.1 217zM930.9 220.2L926.7 239.2L908 237.8z"/>
<path fill="#bdbdbd" d="M844.9 167.9L841.9 184.5L826.9 185zM909 183.1L927.2 184.5L909 205.9zM909 205.9L927.5 203.9L930.9 220.2zM910.5 252.7L928 251.7L908.7 271.6z"/>
<path fill="#c0c0c0" d="M913.5 151.6L925.4 151.9L911.2 167zM908 237.8L926.7 239.2L928 251.7zM896.8 286.1L912.9 286.8L908.3 304.2z"/>
<path fill="#c3c3c3" d="M925.4 151.9L928.6 170.2L911.2 167zM844.9 167.9L858.3 170.1L857.3 186.7zM844.9 167.9L857.3 186.7L841.9 184.5z"/>
<path fill="#c6c6c6" d="M911.3 218.3L930.9 220.2L908 237.8zM875.7 235L895.9 235.9L893.7 252.9zM875.7 235L893.7 252.9L875.3 255.9zM895.9 235.9L908 237.8L893.7 252.9zM908 237.8L928 251.7L910.5 252.7zM893.7 252.9L894.4 270.6L874.8 271.8z"/>
<path fill="#c9c9c9" d="M875.4 132.8L894.2 152.4L876.5 149.6zM910.1 132L913.5 151.6L894.2 152.4zM894.2 152.4L911.2 167L895.1 169.8zM911.2 167L909 183.1L892.4 185zM826.9 185L841.9 184.5L841.3 204.4zM892.4 185L909 183.1L909 205.9zM859.4 201.8L874.1 204.7L857.5 217.3zM909 205.9L930.9 220.2L911.3 218.3zM828.1 219.5L843.6 221.7L845.8 238.4zM843.6 221.7L857.5 217.3L845.8 238.4z"/>
<path fill="#cccccc" d="M895.1 169.8L911.2 167L892.4 185zM895.9 201.1L909 205.9L895.1 217zM895.1 217L908 237.8L895.9 235.9z"/>
<path fill="#cfcfcf" d="M875.4 132.8L893.2 137.1L894.2 152.4zM894.2 152.4L913.5 151.6L911.2 167zM858.3 170.1L875.5 170.2L857.3 186.7zM857.3 186.7L874.1 204.7L859.4 201.8zM892.4 185L895.9 201.1L874.1 204.7zM892.4 185L909 205.9L895.9 201.1zM857.5 217.3L861 237.9L845.8 238.4zM895.1 217L895.9 235.9L875.7 235zM875.7 235L875.3 255.9L857.2 253zM893.7 252.9L908.7 271.6L894.4 270.6zM874.8 271.8L894.4 270.6L896.8 286.1zM896.8 286.1L908.3 304.2L895.6 306.1z"/>
<path fill="#d2d2d2" d="M859.5 154.1L858.3 170.1L844.9 167.9zM826.9 185L823.3 200.5L811.7 203.4zM811.7 203.4L823.3 200.5L828.1 219.5zM841.3 204.4L859.4 201.8L857.5 217.3zM841.3 204.4L857.5 217.3L843.6 221.7zM895.1 217L911.3 218.3L908 237.8zM908.7 271.6L912.9 286.8L896.8 286.1zM879 285.3L896.8 286.1L875.5 305.9z"/>
<path fill="#d5d5d5" d="M876.5 149.6L894.2 152.4L875.5 170.2zM894.2 152.4L895.1 169.8L875.5 170.2zM875.5 170.2L895.1 169.8L892.4 185zM875.5 170.2L892.4 185L874.7 185.3zM826.9 185L841.3 204.4L823.3 200.5zM841.3 204.4L843.6 221.7L828.1 219.5zM909 205.9L911.3 218.3L895.1 217zM857.5 217.3L874 222.1L875.7 235zM857.5 217.3L875.7 235L861 237.9zM874 222.1L895.1 217L875.7 235zM861 237.9L875.7 235L857.2 253zM908 237.8L910.5 252.7L893.7 252.9zM857.2 253L875.3 255.9L874.8 271.8zM875.3 255.9L893.7 252.9L874.8 271.8zM893.7 252.9L910.5 252.7L908.7 271.6zM894.4 270.6L908.7 271.6L896.8 286.1z"/>
<path fill="#d8d8d8" d="M857.3 186.7L859.4 201.8L841.3 204.4zM857.3 186.7L874.7 185.3L874.1 204.7zM874.7 185.3L892.4 185L874.1 204.7zM874.8 271.8L896.8 286.1L879 285.3zM896.8 286.1L895.6 306.1L875.5 305.9z"/>
<path fill="#dbdbdb" d="M823.3 200.5L841.3 204.4L828.1 219.5zM874.1 204.7L874 222.1L857.5 217.3zM874.1 204.7L895.1 217L874 222.1zM845.8 238.4L861 237.9L857.2 253z"/>
<path fill="#dedede" d="M875.5 170.2L874.7 185.3L857.3 186.7z"/>
<polygon points="858.0,167.0 870.0,161.0 878.0,177.0 882.0,200.0 870.0,215.0 856.0,200.0 864.0,183.0" fill="#adadad" fill-opacity=".75"/><polygon points="836.0,183.0 858.0,167.0 864.0,183.0 848.0,205.0 828.0,197.0" fill="#b8b8b8" fill-opacity=".7"/><polyline points="891.0,275.0 897.0,295.0 901.0,311.0" fill="none" stroke="#8a8a8a" stroke-width="1.5"/><polyline points="902.0,283.0 903.0,300.0" fill="none" stroke="#8a8a8a" stroke-width="1.5"/><polygon points="914.0,255.0 926.0,247.0 924.0,273.0 916.0,301.0 910.0,295.0" fill="#9a9a9a"/><polygon points="874.0,162.0 878.0,165.0 876.0,183.0 872.0,177.0" fill="#8f8f8f"/><polygon points="856.0,171.0 870.0,163.0 872.0,177.0 864.0,185.0" fill="#a0a0a0"/><polyline points="915.0,159.0 923.0,178.0 930.0,205.0 935.0,220.0 934.0,243.0 925.0,273.0 916.0,301.0" fill="none" stroke="#999" stroke-width="4" stroke-opacity=".6"/>
</g>
<g clip-path="url(#c_body)">
<path d="M633.8 520.0L654.7 521.7L671.3 523.3L688.0 528.3L704.7 535.0L711.3 537.5L713.8 530.0L711.3 520.0L704.7 510.0L698.0 500.0L718.0 485.0L798.0 480.0L849.0 478.5L846.3 485.0L829.7 498.3L824.7 513.3L824.7 530.0L828.0 545.0L833.0 558.3L836.3 575.0L839.7 591.7L838.0 605.0L834.7 618.3L831.3 618.3L821.3 633.3L811.3 648.3L804.7 663.3L803.8 682.5L813.0 691.7L824.7 706.7L827.2 721.7L821.3 731.7L808.0 743.3L801.3 753.3L791.3 763.3L779.7 773.3L778.0 761.7L764.7 762.5L758.0 753.3L743.0 760.0L729.7 770.0L713.0 773.3L696.3 777.5L681.3 775.8L676.3 771.7L664.7 765.0L646.3 765.0L628.0 761.7L618.0 756.7L609.7 741.7L604.7 726.7L596.3 711.7L586.3 691.7L576.3 671.7L568.8 651.7L564.7 631.7L563.0 628.0L563.0 610.0L564.7 593.3L568.8 578.3L573.8 563.3L580.5 553.3L598.0 537.0z" fill="#bcbcbc"/>
<path fill="#606060" d="M636.7 744.7L637.2 763.9L624.5 762.5z"/>
<path fill="#6c6c6c" d="M656.6 764.4L671.5 783L658.3 779.9z"/>
<path fill="#6f6f6f" d="M673.5 746.4L687.5 766.3L672.2 766.9z"/>
<path fill="#757575" d="M606.7 714.8L619.1 728.4L602.9 732.6zM637.2 763.9L656.6 764.4L640.4 782.8z"/>
<path fill="#787878" d="M607.8 749.7L622.7 749.5L624.5 762.5zM656.6 764.4L658.3 779.9L640.4 782.8z"/>
<path fill="#7b7b7b" d="M636.7 744.7L656.6 764.4L637.2 763.9z"/>
<path fill="#818181" d="M606.7 714.8L602.9 732.6L588.8 727.4zM656.6 764.4L672.2 766.9L671.5 783zM672.2 766.9L687.5 766.3L671.5 783z"/>
<path fill="#878787" d="M622.7 749.5L636.7 744.7L624.5 762.5z"/>
<path fill="#909090" d="M568.3 646.4L590.7 647.3L587.3 662.4zM621.5 697.4L640.3 714.2L619.3 713.7z"/>
<path fill="#939393" d="M587.3 662.4L587.2 676.9L572.7 680.3zM602.9 732.6L619.1 728.4L607.8 749.7z"/>
<path fill="#969696" d="M568.3 661.7L587.3 662.4L572.7 680.3zM619.1 728.4L639.6 727.4L636.7 744.7zM639.6 727.4L656.9 731.2L636.7 744.7zM673.5 746.4L672.2 766.9L656.6 764.4z"/>
<path fill="#999999" d="M551.9 626.2L568.3 646.4L554 644.8zM554 644.8L568.3 646.4L555.2 664zM568.3 646.4L568.3 661.7L555.2 664zM587.2 695.8L605.9 696.6L606.7 714.8zM587.2 695.8L606.7 714.8L587.5 712.2zM619.1 728.4L622.7 749.5L607.8 749.7z"/>
<path fill="#9c9c9c" d="M568.3 646.4L587.3 662.4L568.3 661.7z"/>
<path fill="#9f9f9f" d="M569.5 608.1L570.5 629L551.9 626.2zM605.9 696.6L621.5 697.4L606.7 714.8zM656.9 731.2L654.1 747.9L636.7 744.7zM636.7 744.7L654.1 747.9L656.6 764.4z"/>
<path fill="#a2a2a2" d="M623.4 511.4L637.4 506.3L621.3 528.9zM637.4 506.3L658.5 523.9L640.4 527.6zM676 647L689.6 663.3L671.2 662.1zM587.3 662.4L603.3 680.5L587.2 676.9zM656.9 731.2L673.5 746.4L654.1 747.9z"/>
<path fill="#a5a5a5" d="M604.6 511.5L621.3 528.9L602.5 529zM637.4 506.3L640.4 527.6L621.3 528.9zM602.5 529L621.3 528.9L604.7 544zM621.5 697.4L619.3 713.7L606.7 714.8zM619.3 713.7L640.3 714.2L619.1 728.4zM654.1 747.9L673.5 746.4L656.6 764.4z"/>
<path fill="#a8a8a8" d="M604.7 544L603.8 561.6L586.5 562.2zM569.2 560.4L586.5 562.2L568.4 576.1zM587.2 676.9L603.3 680.5L587.2 695.8zM603.3 680.5L605.9 696.6L587.2 695.8zM655.8 698.8L671.9 712.8L655.2 713.5zM656.9 731.2L670.4 729.9L673.5 746.4z"/>
<path fill="#ababab" d="M604.6 511.5L623.4 511.4L621.3 528.9zM691.9 528.1L708.2 544.1L692.5 544.2zM624.2 659.2L639.3 662.7L637.6 677.9zM606.7 714.8L619.3 713.7L619.1 728.4zM655.2 713.5L671.9 712.8L656.9 731.2z"/>
<path fill="#aeaeae" d="M637.4 506.3L657.2 507.8L658.5 523.9zM657.2 507.8L673.6 511L658.5 523.9zM551.2 594.4L568.8 595.1L569.5 608.1zM554.9 609.9L569.5 608.1L551.9 626.2zM587.5 712.2L606.7 714.8L588.8 727.4z"/>
<path fill="#b1b1b1" d="M673.6 511L675.8 523.3L658.5 523.9zM586.5 562.2L603.8 561.6L602.3 577.4zM586.2 596.2L604.8 608.9L587.2 612.5zM587.3 662.4L604 663L603.3 680.5zM619.1 728.4L636.7 744.7L622.7 749.5z"/>
<path fill="#b4b4b4" d="M589.8 524.3L602.5 529L604.7 544zM675.8 523.3L691.9 528.1L672.1 545.6zM658.4 543.3L672.1 545.6L657.8 559.5zM568.4 576.1L568.8 595.1L551.2 594.4zM551.2 594.4L569.5 608.1L554.9 609.9zM551.9 626.2L570.5 629L568.3 646.4zM570.5 629L589.2 626.4L568.3 646.4zM638.6 647.2L657.1 646.8L655.5 661.9zM637.6 677.9L654.5 676.5L655.8 698.8zM673.1 676.4L687.4 678.4L692.6 693.8z"/>
<path fill="#b7b7b7" d="M586.5 562.2L589.4 578.5L568.4 576.1zM675.5 561.9L692.7 560.3L675.1 577.6zM624.2 659.2L620.2 681L603.3 680.5zM572.7 680.3L587.2 676.9L587.2 695.8zM637.6 677.9L655.8 698.8L636.2 699z"/>
<path fill="#bababa" d="M570.5 542.9L587 542.9L586.5 562.2zM570.5 542.9L586.5 562.2L569.2 560.4zM569.5 608.1L589.2 626.4L570.5 629zM587.2 612.5L604.8 608.9L589.2 626.4zM589.2 626.4L607.4 627.7L604.1 647.6zM624.2 659.2L637.6 677.9L620.2 681zM603.3 680.5L621.5 697.4L605.9 696.6zM621.5 697.4L636.2 699L640.3 714.2z"/>
<path fill="#bdbdbd" d="M692.7 560.3L709.1 559.7L704.6 578.8zM568.4 576.1L586.2 596.2L568.8 595.1zM607.4 627.7L619.1 627.1L604.1 647.6zM620.1 647.8L638.6 647.2L624.2 659.2zM640.3 714.2L656.9 731.2L639.6 727.4z"/>
<path fill="#c0c0c0" d="M691.9 528.1L692.5 544.2L672.1 545.6zM708.2 544.1L709.1 559.7L692.7 560.3zM692.7 560.3L704.6 578.8L688.9 576.2zM568.8 595.1L586.2 596.2L569.5 608.1zM586.2 596.2L587.2 612.5L569.5 608.1zM586.2 596.2L602.3 595.5L604.8 608.9zM656.3 611.7L675 612.3L653.5 630.9zM589.2 626.4L590.7 647.3L568.3 646.4zM653.5 630.9L657.1 646.8L638.6 647.2zM590.7 647.3L604.1 647.6L587.3 662.4zM604.1 647.6L604 663L587.3 662.4zM604.1 647.6L620.1 647.8L624.2 659.2zM655.5 661.9L671.2 662.1L673.1 676.4zM671.2 662.1L689.6 663.3L673.1 676.4zM603.3 680.5L620.2 681L621.5 697.4zM640.3 714.2L639.6 727.4L619.1 728.4z"/>
<path fill="#c3c3c3" d="M589.8 524.3L604.7 544L587 542.9zM640.4 527.6L658.5 523.9L637.2 541.1zM692.5 544.2L708.2 544.1L692.7 560.3zM568.4 576.1L589.4 578.5L586.2 596.2zM638.6 647.2L639.3 662.7L624.2 659.2zM620.2 681L637.6 677.9L621.5 697.4zM671.9 712.8L670.4 729.9L656.9 731.2z"/>
<path fill="#c6c6c6" d="M621.3 528.9L624.1 545.1L604.7 544zM658.5 523.9L675.8 523.3L672.1 545.6zM624.1 545.1L637.2 541.1L621 562.6zM672.1 545.6L692.7 560.3L675.5 561.9zM602.3 577.4L602.3 595.5L586.2 596.2zM602.3 577.4L620.5 597L602.3 595.5zM589.2 626.4L604.1 647.6L590.7 647.3zM638.6 647.2L655.5 661.9L639.3 662.7zM676 647L671.2 662.1L655.5 661.9zM655.8 698.8L655.2 713.5L640.3 714.2z"/>
<path fill="#c9c9c9" d="M621.3 528.9L640.4 527.6L637.2 541.1zM688.9 576.2L704.6 578.8L691.3 596.4zM602.3 595.5L620.5 597L604.8 608.9zM654.4 595.2L656.3 611.7L639.5 613.6zM604.8 608.9L607.4 627.7L589.2 626.4zM653.5 630.9L676 647L657.1 646.8zM655.5 661.9L654.5 676.5L637.6 677.9zM655.5 661.9L673.1 676.4L654.5 676.5zM673.1 676.4L675.8 695.5L655.8 698.8zM673.1 676.4L692.6 693.8L675.8 695.5zM640.3 714.2L655.2 713.5L656.9 731.2z"/>
<path fill="#cccccc" d="M621.3 528.9L637.2 541.1L624.1 545.1zM658.5 523.9L658.4 543.3L637.2 541.1zM658.5 523.9L672.1 545.6L658.4 543.3zM587 542.9L604.7 544L586.5 562.2zM604.7 544L624.1 545.1L621 562.6zM672.1 545.6L692.5 544.2L692.7 560.3zM692.7 560.3L688.9 576.2L675.1 577.6zM654.4 595.2L675 612.3L656.3 611.7zM604.8 608.9L619.1 627.1L607.4 627.7zM619.1 627.1L620.1 647.8L604.1 647.6zM604.1 647.6L624.2 659.2L604 663zM676 647L688.7 642.2L689.6 663.3zM604 663L624.2 659.2L603.3 680.5zM639.3 662.7L655.5 661.9L637.6 677.9zM654.5 676.5L673.1 676.4L655.8 698.8z"/>
<path fill="#cfcfcf" d="M604.7 544L621 562.6L603.8 561.6zM586.5 562.2L602.3 577.4L589.4 578.5zM589.4 578.5L602.3 577.4L586.2 596.2zM569.5 608.1L587.2 612.5L589.2 626.4zM639.5 613.6L641.7 628.1L619.1 627.1zM653.5 630.9L672.6 627.4L676 647zM672.6 627.4L687 630.5L676 647zM637.6 677.9L636.2 699L621.5 697.4zM636.2 699L655.8 698.8L640.3 714.2zM655.8 698.8L675.8 695.5L671.9 712.8z"/>
<path fill="#d2d2d2" d="M672.1 545.6L675.5 561.9L657.8 559.5zM675.1 577.6L688.9 576.2L691.3 596.4zM620.5 597L639.5 613.6L623 612.4zM674.9 596.8L691.3 596.4L675 612.3zM604.8 608.9L623 612.4L619.1 627.1zM675 612.3L692.5 611.7L687 630.5zM619.1 627.1L641.7 628.1L638.6 647.2zM619.1 627.1L638.6 647.2L620.1 647.8zM657.1 646.8L676 647L655.5 661.9zM689.6 663.3L687.4 678.4L673.1 676.4z"/>
<path fill="#d5d5d5" d="M637.2 541.1L637.4 562L621 562.6zM637.2 541.1L657.8 559.5L637.4 562zM638.3 578.6L658.4 580L654.4 595.2zM675.1 577.6L674.9 596.8L654.4 595.2zM675.1 577.6L691.3 596.4L674.9 596.8zM620.5 597L623 612.4L604.8 608.9zM654.4 595.2L674.9 596.8L675 612.3zM691.3 596.4L692.5 611.7L675 612.3zM623 612.4L639.5 613.6L619.1 627.1zM641.7 628.1L653.5 630.9L638.6 647.2z"/>
<path fill="#d8d8d8" d="M603.8 561.6L621 562.6L602.3 577.4zM621 562.6L619.6 574.7L602.3 577.4zM657.8 559.5L675.5 561.9L675.1 577.6zM602.3 577.4L619.6 574.7L620.5 597zM619.6 574.7L638.3 578.6L620.5 597zM638.3 578.6L654.4 595.2L638.2 594.1zM658.4 580L675.1 577.6L654.4 595.2zM639.5 613.6L656.3 611.7L653.5 630.9zM639.5 613.6L653.5 630.9L641.7 628.1zM675 612.3L687 630.5L672.6 627.4zM687 630.5L688.7 642.2L676 647z"/>
<path fill="#dbdbdb" d="M637.2 541.1L658.4 543.3L657.8 559.5zM621 562.6L637.4 562L638.3 578.6zM621 562.6L638.3 578.6L619.6 574.7zM657.8 559.5L658.4 580L638.3 578.6zM657.8 559.5L675.1 577.6L658.4 580zM638.3 578.6L638.2 594.1L620.5 597zM620.5 597L638.2 594.1L639.5 613.6zM638.2 594.1L654.4 595.2L639.5 613.6zM675 612.3L672.6 627.4L653.5 630.9z"/>
<path fill="#dedede" d="M637.4 562L657.8 559.5L638.3 578.6z"/>
<polyline points="570.0,575.0 581.0,553.0 604.0,533.0 630.0,523.0 671.0,525.0 710.0,538.0" fill="none" stroke="#666" stroke-width="9" stroke-opacity=".8"/><polyline points="574.0,587.0 590.0,560.0 612.0,543.0 640.0,535.0 674.0,537.0 704.0,549.0" fill="none" stroke="#878787" stroke-width="22" stroke-opacity=".5"/><polygon points="653.0,555.0 698.0,543.0 710.0,539.0 688.0,560.0 663.0,570.0" fill="#a6a6a6"/><polyline points="691.0,543.0 704.0,542.0 688.0,557.0 670.0,575.0 648.0,597.0" fill="none" stroke="#666" stroke-width="1.2"/><polygon points="635.0,750.0 654.0,761.0 668.0,743.0 648.0,753.0" fill="#8c8c8c"/><polygon points="638.0,698.0 658.0,701.0 660.0,707.0 646.0,703.0" fill="#8a8a8a"/><polyline points="628.0,667.0 642.0,668.0 653.0,680.0" fill="none" stroke="#777" stroke-width="1"/><polyline points="628.0,682.0 643.0,669.0" fill="none" stroke="#777" stroke-width="1"/>
</g>
<g clip-path="url(#c_chest)">
<path d="M711.3 537.5L713.8 530.0L711.3 520.0L704.7 510.0L698.0 500.0L718.0 485.0L798.0 480.0L849.0 478.5L846.3 485.0L829.7 498.3L824.7 513.3L824.7 530.0L828.0 545.0L833.0 558.3L836.3 575.0L839.7 591.7L838.0 605.0L834.7 618.3L831.3 618.3L821.3 633.3L811.3 648.3L804.7 663.3L803.8 682.5L813.0 691.7L824.7 706.7L827.2 721.7L821.3 731.7L808.0 743.3L801.3 753.3L791.3 763.3L779.7 773.3L778.0 761.7L764.7 762.5L758.0 753.3L743.0 760.0L729.7 770.0L713.0 773.3L696.3 777.5L681.3 775.8L676.3 771.7L670.0 747.0L669.0 715.0L675.0 680.0L678.0 655.0L684.0 630.0L685.0 615.0L690.0 585.0L701.0 560.0z" fill="#bcbcbc"/>
<path fill="#666666" d="M843.5 477.1L841.2 489L825.7 489.1z"/>
<path fill="#6c6c6c" d="M824.9 608.3L842.1 608.8L823 630.4zM740.9 749.6L755.6 764.4L740.4 761.1z"/>
<path fill="#727272" d="M687.5 766.3L709.2 780.8L689.9 779.9zM775.8 765.1L794.1 762.5L772.5 781.4z"/>
<path fill="#757575" d="M843.5 477.1L859.7 490.3L841.2 489zM823 630.4L828.7 646.2L810.4 646.4zM823 630.4L841.4 643.9L828.7 646.2zM808.9 732.4L827.1 728.9L811.6 744.5zM721.9 766.2L740.4 761.1L743.3 778.2z"/>
<path fill="#787878" d="M740.9 749.6L755.8 747.4L755.6 764.4zM705 761.5L721.9 766.2L709.2 780.8z"/>
<path fill="#7b7b7b" d="M825.7 489.1L841.2 489L843.2 507.3zM842.8 579.4L843 591.7L827 596.1z"/>
<path fill="#7e7e7e" d="M656.9 731.2L670.4 729.9L673.5 746.4zM777.5 749L775.8 765.1L755.6 764.4z"/>
<path fill="#818181" d="M826.9 540.1L845.8 544.3L825.5 560.8zM656.9 731.2L673.5 746.4L654.1 747.9z"/>
<path fill="#848484" d="M693 491.6L710 507.6L692.4 507.6zM841.2 489L859.7 490.3L843.2 507.3zM823.6 510L843.2 507.3L826.3 524.5zM823 630.4L840.1 626.4L841.4 643.9zM740.9 749.6L740.4 761.1L721.9 766.2zM672.2 766.9L687.5 766.3L671.5 783z"/>
<path fill="#878787" d="M826.3 524.5L845.8 544.3L826.9 540.1zM827 596.1L843 591.7L842.1 608.8zM673.5 746.4L687.5 766.3L672.2 766.9zM740.4 761.1L755.6 764.4L743.3 778.2z"/>
<path fill="#8a8a8a" d="M810.4 646.4L828.7 646.2L823.1 660.7zM791 731.1L808.9 732.4L811.6 744.5z"/>
<path fill="#8d8d8d" d="M825.7 489.1L843.2 507.3L823.6 510zM655.8 698.8L671.9 712.8L655.2 713.5zM808.6 697.1L827.9 693.7L810.1 711z"/>
<path fill="#909090" d="M671.2 662.1L689.6 663.3L673.1 676.4zM790.9 660L808.3 664.4L810.9 681.2zM675.8 695.5L692.6 693.8L671.9 712.8z"/>
<path fill="#939393" d="M675 612.3L692.5 611.7L687 630.5zM808.7 625.9L823 630.4L810.4 646.4zM810.4 646.4L823.1 660.7L808.3 664.4zM671.9 712.8L670.4 729.9L656.9 731.2zM755.8 747.4L777.5 749L755.6 764.4zM721.9 766.2L726.7 783.8L709.2 780.8z"/>
<path fill="#969696" d="M691.3 596.4L692.5 611.7L675 612.3zM811.5 593L827 596.1L811.8 609.2zM721.9 766.2L743.3 778.2L726.7 783.8z"/>
<path fill="#999999" d="M807.6 509.8L823.6 510L826.3 524.5zM708.2 544.1L709.1 559.7L692.7 560.3zM845.8 544.3L843.6 560.4L825.5 560.8zM827 596.1L842.1 608.8L824.9 608.3zM842.1 608.8L840.1 626.4L823 630.4zM671.9 712.8L687.9 729.6L670.4 729.9zM791 731.1L794.8 747.1L777.5 749zM687.5 766.3L705 761.5L709.2 780.8z"/>
<path fill="#9c9c9c" d="M710 507.6L724.1 523.5L709 528.7zM676 647L689.6 663.3L671.2 662.1zM655.2 713.5L671.9 712.8L656.9 731.2zM671.9 712.8L688.8 714.6L687.9 729.6zM791 731.1L811.6 744.5L794.8 747.1zM654.1 747.9L673.5 746.4L656.6 764.4z"/>
<path fill="#9f9f9f" d="M692.4 507.6L710 507.6L691.9 528.1zM691.9 528.1L709 528.7L708.2 544.1zM691.9 528.1L708.2 544.1L692.5 544.2zM709 528.7L724.1 523.5L708.2 544.1zM692.5 544.2L708.2 544.1L692.7 560.3zM825.5 560.8L843.6 560.4L842.8 579.4zM675.1 577.6L688.9 576.2L691.3 596.4zM810.4 646.4L808.3 664.4L790.9 660zM777.5 749L794.8 747.1L794.1 762.5z"/>
<path fill="#a2a2a2" d="M693 491.6L708.7 492.5L710 507.6zM825.7 489.1L823.6 510L807.6 509.8zM710 507.6L709 528.7L691.9 528.1zM811.8 609.2L824.9 608.3L823 630.4zM687 630.5L688.7 642.2L676 647z"/>
<path fill="#a5a5a5" d="M708.7 492.5L725.9 489.3L710 507.6zM808.1 526.9L826.3 524.5L810.2 542.6zM827.9 693.7L826 710.9L810.1 711zM810.1 711L827.1 728.9L808.9 732.4zM726.6 731.3L738.2 731.6L740.9 749.6z"/>
<path fill="#a8a8a8" d="M807.6 509.8L826.3 524.5L808.1 526.9zM692.7 560.3L709.1 559.7L704.6 578.8zM792.8 628.3L810.4 646.4L789.2 642.2zM790.9 660L810.9 681.2L789.1 676.2zM673.1 676.4L692.6 693.8L675.8 695.5zM741.9 713.2L759.2 728.6L738.2 731.6zM774 711.6L791 731.1L777 729.5zM777 729.5L791 731.1L777.5 749zM673.5 746.4L672.2 766.9L656.6 764.4zM704.9 745.1L721.9 766.2L705 761.5zM794.8 747.1L811.6 744.5L794.1 762.5zM687.5 766.3L689.9 779.9L671.5 783z"/>
<path fill="#ababab" d="M675.1 577.6L691.3 596.4L674.9 596.8zM792.8 628.3L808.7 625.9L810.4 646.4zM810.1 711L808.9 732.4L791 731.1zM810.1 711L826 710.9L827.1 728.9zM738.2 731.6L759.2 728.6L740.9 749.6zM777.5 749L794.1 762.5L775.8 765.1z"/>
<path fill="#aeaeae" d="M825.5 560.8L842.8 579.4L826.1 576.2zM674.9 596.8L691.3 596.4L675 612.3zM811.8 609.2L823 630.4L808.7 625.9zM672.6 627.4L687 630.5L676 647zM676 647L688.7 642.2L689.6 663.3zM708 695L725.4 697.2L706.1 710.7zM706.1 710.7L708.8 731.8L687.9 729.6zM670.4 729.9L687.9 729.6L673.5 746.4zM673.5 746.4L689.5 748.2L687.5 766.3zM704.9 745.1L705 761.5L687.5 766.3z"/>
<path fill="#b1b1b1" d="M790.5 489.8L811.9 492.2L807.6 509.8zM689.6 663.3L687.4 678.4L673.1 676.4zM790.9 660L789.1 676.2L775.6 681zM673.1 676.4L675.8 695.5L655.8 698.8zM775.6 681L789.6 697.1L776.5 694.7zM810.9 681.2L827.9 693.7L808.6 697.1zM706.1 710.7L723.8 712L726.6 731.3z"/>
<path fill="#b4b4b4" d="M710 507.6L725.8 507.4L724.1 523.5zM826.3 524.5L826.9 540.1L810.2 542.6zM708.2 544.1L726.9 561.7L709.1 559.7zM826.1 576.2L842.8 579.4L827 596.1zM675 612.3L687 630.5L672.6 627.4zM739.1 664.5L759.1 661.9L743.3 678.9zM673.1 676.4L687.4 678.4L692.6 693.8zM726.6 731.3L723.4 744.3L704.9 745.1zM759.2 728.6L755.8 747.4L740.9 749.6z"/>
<path fill="#b7b7b7" d="M687 630.5L704.2 625.4L704.2 644.3zM755.1 644.3L776.3 643L759.1 661.9zM775.6 681L789.1 676.2L789.6 697.1zM755.5 712.3L774 711.6L759.2 728.6zM774 711.6L777 729.5L759.2 728.6zM723.4 744.3L740.9 749.6L721.9 766.2z"/>
<path fill="#bababa" d="M810.2 542.6L825.5 560.8L807.3 561.1zM688.9 576.2L704.6 578.8L691.3 596.4zM808 578.6L827 596.1L811.5 593zM810.9 681.2L808.6 697.1L789.6 697.1zM655.8 698.8L675.8 695.5L671.9 712.8zM741.9 713.2L755.5 712.3L759.2 728.6zM687.9 729.6L689.5 748.2L673.5 746.4z"/>
<path fill="#bdbdbd" d="M825.5 560.8L826.1 576.2L808 578.6zM776 574.7L789.7 594.8L772.5 591.9zM692.5 611.7L706.8 610.4L687 630.5zM792.8 628.3L789.2 642.2L776.3 643zM689.6 663.3L706.8 664.8L705.3 681zM705.3 681L725.4 697.2L708 695zM789.1 676.2L810.9 681.2L789.6 697.1zM688.8 714.6L706.1 710.7L687.9 729.6zM689.5 748.2L704.9 745.1L687.5 766.3z"/>
<path fill="#c0c0c0" d="M811.9 492.2L825.7 489.1L807.6 509.8zM724.1 523.5L722 540.9L708.2 544.1zM709.1 559.7L726.9 561.7L704.6 578.8zM706.8 610.4L704.2 625.4L687 630.5zM688.7 642.2L704.2 644.3L689.6 663.3zM704.2 644.3L706.8 664.8L689.6 663.3zM776.3 643L789.2 642.2L790.9 660zM725.4 697.2L723.8 712L706.1 710.7zM706.1 710.7L726.6 731.3L708.8 731.8zM726.6 731.3L740.9 749.6L723.4 744.3zM759.2 728.6L777.5 749L755.8 747.4zM704.9 745.1L723.4 744.3L721.9 766.2z"/>
<path fill="#c3c3c3" d="M708.2 544.1L722 540.9L726.9 561.7zM810.2 542.6L826.9 540.1L825.5 560.8zM807.3 561.1L825.5 560.8L808 578.6zM808 578.6L826.1 576.2L827 596.1zM789.7 594.8L811.5 593L811.8 609.2zM789.7 594.8L811.8 609.2L790.3 610.7zM743.3 678.9L741.2 695.8L725.4 697.2zM743.3 678.9L756.7 698.7L741.2 695.8zM692.6 693.8L688.8 714.6L671.9 712.8zM692.6 693.8L708 695L706.1 710.7zM789.6 697.1L808.6 697.1L810.1 711z"/>
<path fill="#c6c6c6" d="M742.4 509.2L758.9 525.1L743.8 527zM775.2 507.2L789.7 510.1L789.8 528.6zM724.1 523.5L738.3 544.7L722 540.9zM789.8 528.6L808.1 526.9L810.2 542.6zM692.7 560.3L704.6 578.8L688.9 576.2zM726.9 561.7L726.2 578.7L704.6 578.8zM704.6 578.8L723.9 595.1L709.4 595.9zM691.3 596.4L706.8 610.4L692.5 611.7zM741.6 647.9L739.1 664.5L724.7 659.9zM741.6 647.9L755.1 644.3L759.1 661.9zM741.6 647.9L759.1 661.9L739.1 664.5zM776.3 643L776.5 660.9L759.1 661.9zM705.3 681L708 695L692.6 693.8zM725.4 697.2L741.9 713.2L723.8 712zM687.9 729.6L704.9 745.1L689.5 748.2zM708.8 731.8L726.6 731.3L704.9 745.1zM759.2 728.6L777 729.5L777.5 749z"/>
<path fill="#c9c9c9" d="M790.5 489.8L789.7 510.1L775.2 507.2zM790.5 489.8L807.6 509.8L789.7 510.1zM789.7 510.1L807.6 509.8L789.8 528.6zM789.8 528.6L810.2 542.6L789.5 544zM789.5 544L810.2 542.6L789.7 560.5zM789.7 560.5L807.3 561.1L808 578.6zM704.6 578.8L709.4 595.9L691.3 596.4zM789.7 594.8L790.3 610.7L772 611.1zM827 596.1L824.9 608.3L811.8 609.2zM776.3 643L790.9 660L776.5 660.9zM789.2 642.2L810.4 646.4L790.9 660zM759.1 661.9L759 681.3L743.3 678.9zM687.4 678.4L705.3 681L692.6 693.8zM725.4 697.2L741.2 695.8L741.9 713.2zM723.8 712L741.9 713.2L726.6 731.3zM741.9 713.2L738.2 731.6L726.6 731.3zM774 711.6L789.8 715.9L791 731.1z"/>
<path fill="#cccccc" d="M725.9 489.3L725.8 507.4L710 507.6zM758.9 489.1L757.9 506.2L742.4 509.2zM758.9 489.1L773.1 491.7L775.2 507.2zM758.9 489.1L775.2 507.2L757.9 506.2zM773.1 491.7L790.5 489.8L775.2 507.2zM775.2 540.6L776.8 557.3L755.3 560.3zM704.6 578.8L726.2 578.7L723.9 595.1zM772 611.1L792.8 628.3L773.9 629.4zM687 630.5L704.2 644.3L688.7 642.2zM704.2 625.4L722.7 627.1L704.2 644.3zM704.2 644.3L724.3 644L724.7 659.9zM704.2 644.3L724.7 659.9L706.8 664.8zM689.6 663.3L705.3 681L687.4 678.4zM724.7 659.9L739.1 664.5L743.3 678.9zM759.1 661.9L775.6 681L759 681.3zM741.2 695.8L756.7 698.7L741.9 713.2zM756.7 698.7L776.5 694.7L774 711.6zM756.7 698.7L774 711.6L755.5 712.3zM789.8 715.9L810.1 711L791 731.1z"/>
<path fill="#cfcfcf" d="M725.8 507.4L742.4 509.2L724.1 523.5zM724.1 523.5L743.8 527L738.3 544.7zM722 540.9L738.3 544.7L726.9 561.7zM810.2 542.6L807.3 561.1L789.7 560.5zM808 578.6L811.5 593L789.7 594.8zM709.4 595.9L723.9 595.1L706.8 610.4zM723.9 595.1L738.2 609.9L722.7 614zM738.2 609.9L755.3 629.1L741.2 630.1zM772 611.1L773.9 629.4L755.3 629.1zM772 611.1L790.3 610.7L792.8 628.3zM790.3 610.7L811.8 609.2L792.8 628.3zM811.8 609.2L808.7 625.9L792.8 628.3zM755.3 629.1L755.1 644.3L741.6 647.9zM755.3 629.1L773.9 629.4L776.3 643zM755.3 629.1L776.3 643L755.1 644.3zM724.3 644L741.6 647.9L724.7 659.9zM706.8 664.8L724.7 659.9L705.3 681zM759.1 661.9L776.5 660.9L775.6 681zM775.6 681L776.5 694.7L756.7 698.7zM776.5 694.7L789.6 697.1L774 711.6z"/>
<path fill="#d2d2d2" d="M757.9 506.2L775.2 507.2L758.9 525.1zM726.9 561.7L741.1 559L739.8 579.1zM726.9 561.7L739.8 579.1L726.2 578.7zM726.2 578.7L739.8 579.1L723.9 595.1zM793.9 575L808 578.6L789.7 594.8zM691.3 596.4L709.4 595.9L706.8 610.4zM740.6 597L757 596.4L738.2 609.9zM738.2 609.9L741.2 630.1L722.7 627.1zM738.2 609.9L760.1 611.4L755.3 629.1zM760.1 611.4L772 611.1L755.3 629.1zM722.7 627.1L724.3 644L704.2 644.3zM722.7 627.1L741.6 647.9L724.3 644zM776.5 660.9L790.9 660L775.6 681zM724.7 680.1L743.3 678.9L725.4 697.2zM743.3 678.9L759 681.3L756.7 698.7zM759 681.3L775.6 681L756.7 698.7zM692.6 693.8L706.1 710.7L688.8 714.6zM789.6 697.1L789.8 715.9L774 711.6z"/>
<path fill="#d5d5d5" d="M725.9 489.3L743.9 493.7L742.4 509.2zM725.9 489.3L742.4 509.2L725.8 507.4zM743.9 493.7L758.9 489.1L742.4 509.2zM742.4 509.2L757.9 506.2L758.9 525.1zM807.6 509.8L808.1 526.9L789.8 528.6zM775.2 525.8L789.8 528.6L775.2 540.6zM738.3 544.7L741.1 559L726.9 561.7zM775.2 540.6L789.7 560.5L776.8 557.3zM755.3 560.3L776.8 557.3L776 574.7zM755.3 560.3L776 574.7L760.8 579zM789.7 560.5L808 578.6L793.9 575zM739.8 579.1L757 596.4L740.6 597zM776 574.7L793.9 575L789.7 594.8zM723.9 595.1L740.6 597L738.2 609.9zM756.7 698.7L755.5 712.3L741.9 713.2zM687.9 729.6L708.8 731.8L704.9 745.1z"/>
<path fill="#d8d8d8" d="M742.4 509.2L743.8 527L724.1 523.5zM775.2 507.2L775.2 525.8L758.9 525.1zM775.2 507.2L789.8 528.6L775.2 525.8zM775.2 540.6L789.5 544L789.7 560.5zM776.8 557.3L789.7 560.5L776 574.7zM739.8 579.1L740.6 597L723.9 595.1zM760.8 579L776 574.7L757 596.4zM723.9 595.1L722.7 614L706.8 610.4zM757 596.4L760.1 611.4L738.2 609.9zM773.9 629.4L792.8 628.3L776.3 643zM724.7 659.9L743.3 678.9L724.7 680.1zM705.3 681L724.7 680.1L725.4 697.2z"/>
<path fill="#dbdbdb" d="M743.8 527L758.9 525.1L738.3 544.7zM758.9 525.1L775.2 525.8L775.2 540.6zM789.8 528.6L789.5 544L775.2 540.6zM741.1 559L755.3 560.3L739.8 579.1zM755.3 560.3L760.8 579L739.8 579.1zM789.7 560.5L793.9 575L776 574.7zM739.8 579.1L760.8 579L757 596.4zM757 596.4L772 611.1L760.1 611.4zM772.5 591.9L789.7 594.8L772 611.1zM722.7 614L738.2 609.9L722.7 627.1zM722.7 627.1L741.2 630.1L741.6 647.9zM724.7 659.9L724.7 680.1L705.3 681zM789.6 697.1L810.1 711L789.8 715.9z"/>
<path fill="#dedede" d="M758.9 525.1L756.2 540.3L738.3 544.7zM758.9 525.1L775.2 540.6L756.2 540.3zM738.3 544.7L756.2 540.3L755.3 560.3zM738.3 544.7L755.3 560.3L741.1 559zM756.2 540.3L775.2 540.6L755.3 560.3zM776 574.7L772.5 591.9L757 596.4zM757 596.4L772.5 591.9L772 611.1zM706.8 610.4L722.7 614L722.7 627.1zM706.8 610.4L722.7 627.1L704.2 625.4zM741.2 630.1L755.3 629.1L741.6 647.9z"/>
<polyline points="711.0,537.0 701.0,560.0 690.0,585.0 685.0,615.0 684.0,630.0" fill="none" stroke="#7a7a7a" stroke-width="5" stroke-opacity=".6"/><polygon points="707.0,500.0 738.0,502.0 720.0,518.0" fill="#e0e0e0"/><polygon points="753.0,521.0 770.0,511.0 787.0,521.0 771.0,517.0" fill="#949494"/><polygon points="758.0,524.0 787.0,526.0 769.0,535.0 784.0,536.0 758.0,530.0" fill="#949494"/><polygon points="739.0,750.0 748.0,721.0 755.0,753.0" fill="#8f8f8f"/><polygon points="670.0,715.0 681.0,713.0 679.0,771.0 670.0,747.0" fill="#8f8f8f"/><polyline points="736.0,535.0 721.0,551.0" fill="none" stroke="#8a8a8a" stroke-width=".8"/><polyline points="839.0,592.0 838.0,605.0 833.0,619.0 821.0,633.0 811.0,648.0 805.0,663.0 804.0,682.0" fill="none" stroke="#8a8a8a" stroke-width="4" stroke-opacity=".6"/>
</g>
<g clip-path="url(#c_head)">
<path d="M643.0 240.0L648.0 233.3L658.0 225.0L673.0 213.3L689.7 204.2L714.7 196.7L731.3 190.8L748.0 187.5L764.7 186.0L781.3 188.3L798.0 192.5L811.0 196.0L828.0 210.0L848.0 228.0L864.7 248.0L881.0 268.0L894.7 288.0L903.0 308.0L908.8 321.7L909.0 345.0L909.7 365.0L908.8 381.7L905.5 398.3L901.3 415.0L896.3 431.7L891.3 443.3L881.3 455.0L868.0 464.0L858.0 472.0L854.7 476.7L838.0 487.0L821.0 493.0L798.0 498.0L768.0 501.5L738.0 501.7L713.0 500.0L696.0 498.0L683.0 493.0L671.0 486.7L658.0 475.0L648.0 461.7L638.0 448.0L631.3 436.7L623.0 423.0L614.7 408.3L609.0 385.0L604.7 361.7L603.0 335.0L604.0 315.0L606.3 300.0L613.0 280.0L623.0 263.0L633.0 250.0z" fill="#bcbcbc"/>
<path fill="#606060" d="M857.9 459.4L861.2 476.4L843.5 477.1zM843.5 477.1L841.2 489L825.7 489.1z"/>
<path fill="#696969" d="M758.9 489.1L775.2 507.2L757.9 506.2zM790.5 489.8L811.9 492.2L807.6 509.8z"/>
<path fill="#6c6c6c" d="M913.2 354.4L925.3 357.9L908.2 374.9zM857.9 459.4L874.5 457L875.4 476zM825.7 489.1L823.6 510L807.6 509.8z"/>
<path fill="#6f6f6f" d="M893.7 252.9L894.4 270.6L874.8 271.8zM876.4 441.5L892.9 460.5L874.5 457z"/>
<path fill="#727272" d="M874.5 457L892.9 460.5L875.4 476zM790.5 489.8L789.7 510.1L775.2 507.2zM790.5 489.8L807.6 509.8L789.7 510.1zM825.7 489.1L843.2 507.3L823.6 510z"/>
<path fill="#757575" d="M908.2 374.9L928 389.4L913.9 392.8z"/>
<path fill="#787878" d="M908.2 374.9L929.1 370.3L928 389.4zM810 472.4L825.7 489.1L811.9 492.2zM843.5 477.1L859.7 490.3L841.2 489zM693 491.6L708.7 492.5L710 507.6zM743.9 493.7L758.9 489.1L742.4 509.2zM773.1 491.7L790.5 489.8L775.2 507.2z"/>
<path fill="#7b7b7b" d="M708.7 492.5L725.9 489.3L710 507.6zM725.9 489.3L743.9 493.7L742.4 509.2z"/>
<path fill="#7e7e7e" d="M908.2 374.9L913.9 392.8L891.3 391zM607.1 423.6L624.6 421.4L604.2 441.2zM893.8 421.3L908.8 421.3L913.6 442.6zM843.5 477.1L861.2 476.4L859.7 490.3zM693 491.6L710 507.6L692.4 507.6zM758.9 489.1L773.1 491.7L775.2 507.2zM825.7 489.1L841.2 489L843.2 507.3z"/>
<path fill="#818181" d="M896.9 354.2L913.2 354.4L908.2 374.9zM604.4 407.9L622.8 408.7L624.6 421.4zM876.4 441.5L874.5 457L857.9 459.4zM810 472.4L811.9 492.2L790.5 489.8zM674.1 491.8L693 491.6L673.6 511z"/>
<path fill="#848484" d="M588.3 288.6L602.7 289.7L605.5 302.4zM693 491.6L692.4 507.6L673.6 511z"/>
<path fill="#878787" d="M773.7 186.3L792.8 185.5L774.3 200.6zM588.3 288.6L605.5 302.4L589.9 303.6zM605.5 302.4L620.4 305.3L622 320.7zM585.9 358.4L603.8 357.5L607.8 373.3zM640.8 406.2L639.8 422.8L624.6 421.4zM893.8 421.3L913.6 442.6L896.7 439.7zM794.2 477.4L810 472.4L790.5 489.8z"/>
<path fill="#8a8a8a" d="M895.1 320.2L910.2 324.4L912.2 338.5zM585.9 358.4L607.8 373.3L586.2 374.8zM586.2 374.8L607.8 373.3L586.5 389.6zM606.4 391.8L621.6 387.6L604.4 407.9zM826.4 458.9L824.8 472.8L810 472.4zM826.4 458.9L843.5 477.1L824.8 472.8zM777.5 474.2L773.1 491.7L758.9 489.1zM811.9 492.2L825.7 489.1L807.6 509.8z"/>
<path fill="#8d8d8d" d="M589.9 303.6L605.5 302.4L589.8 324.8zM895.1 320.2L892 337.8L876.5 337.4zM912.2 338.5L913.2 354.4L896.9 354.2zM607.8 373.3L606.4 391.8L586.5 389.6zM640.8 406.2L655.8 404.3L658.8 421.1zM638 438.1L655.5 460L640.6 459.5zM777.5 474.2L790.5 489.8L773.1 491.7zM824.8 472.8L843.5 477.1L825.7 489.1z"/>
<path fill="#909090" d="M895.7 370.8L908.2 374.9L891.3 391zM861.7 387.6L877.9 407.1L859.2 409.6zM828.6 424.7L843.6 439.4L826.7 438.7zM893.8 421.3L896.7 439.7L876.4 441.5zM777.5 474.2L794.2 477.4L790.5 489.8zM725.9 489.3L742.4 509.2L725.8 507.4z"/>
<path fill="#939393" d="M810 184.9L826.9 185L811.7 203.4zM605.3 269.7L623.3 272.6L620.8 286.9zM874.8 271.8L894.4 270.6L896.8 286.1zM605.5 302.4L606.2 319.6L589.8 324.8zM876.5 337.4L892 337.8L896.9 354.2zM891.3 391L891.7 404.8L877.9 407.1zM624.6 421.4L620.4 443.8L604.2 441.2zM722.1 458.9L726.1 474.1L705.9 477.6zM775.2 456.6L790.2 460.8L777.5 474.2zM845.2 458.1L857.9 459.4L843.5 477.1zM857.9 459.4L875.4 476L861.2 476.4zM810 472.4L824.8 472.8L825.7 489.1zM725.9 489.3L725.8 507.4L710 507.6z"/>
<path fill="#969696" d="M843.6 221.7L857.5 217.3L845.8 238.4zM857.2 253L875.3 255.9L874.8 271.8zM874.8 271.8L896.8 286.1L879 285.3zM896.8 286.1L908.3 304.2L895.6 306.1zM895.6 306.1L908.3 304.2L895.1 320.2zM908.3 304.2L910.2 324.4L895.1 320.2zM589.8 324.8L606.2 319.6L606.2 336.6zM896.9 354.2L908.2 374.9L895.7 370.8zM925.3 357.9L929.1 370.3L908.2 374.9zM621.6 387.6L622.8 408.7L604.4 407.9zM759.2 389.2L774.3 404.4L759.7 407.9zM604.4 407.9L624.6 421.4L607.1 423.6zM877.9 407.1L875 421.9L861.5 421.5zM624.6 421.4L638 438.1L620.4 443.8zM875 421.9L893.8 421.3L876.4 441.5zM620.4 443.8L638 438.1L620.1 459.3zM638 438.1L640.6 459.5L620.1 459.3zM722.1 458.9L740.6 477.7L726.1 474.1zM705.9 477.6L708.7 492.5L693 491.6zM705.9 477.6L726.1 474.1L725.9 489.3zM705.9 477.6L725.9 489.3L708.7 492.5zM758.9 489.1L757.9 506.2L742.4 509.2z"/>
<path fill="#999999" d="M587.5 339.9L606.2 336.6L585.9 358.4zM606.2 336.6L603.8 357.5L585.9 358.4zM891.3 391L914 406L891.7 404.8zM622.8 408.7L640.8 406.2L624.6 421.4zM877.9 407.1L893.8 421.3L875 421.9zM914 406L908.8 421.3L893.8 421.3zM624.6 421.4L639.8 422.8L638 438.1zM808.2 441.2L826.4 458.9L809.2 456.9zM688.2 460.4L687.8 476.6L671.3 472.2zM722.1 458.9L743.3 455L740.6 477.7zM743.3 455L755.1 456.4L740.6 477.7zM755.1 456.4L775.2 456.6L777.5 474.2zM809.2 456.9L826.4 458.9L810 472.4zM657.5 474.5L671.3 472.2L657.1 493.6zM740.6 477.7L743.9 493.7L725.9 489.3z"/>
<path fill="#9c9c9c" d="M688.9 188.8L705 203L690.4 203zM792.8 185.5L811.7 203.4L794.2 204.5zM705 203L704.2 220.2L690.7 219.1zM811.7 203.4L823.3 200.5L828.1 219.5zM828.1 219.5L827.1 239.2L809.9 238.4zM845.8 238.4L861 237.9L857.2 253zM875.7 235L875.3 255.9L857.2 253zM895.1 320.2L912.2 338.5L892 337.8zM603.8 357.5L621 354.9L607.8 373.3zM891.3 391L913.9 392.8L914 406zM877.9 407.1L891.7 404.8L893.8 421.3zM891.7 404.8L914 406L893.8 421.3zM808.2 441.2L809.2 456.9L790.2 460.8zM860.2 440.6L876.4 441.5L857.9 459.4zM876.4 441.5L896.7 439.7L892.9 460.5zM640.6 459.5L655.5 460L640.8 476.7zM790.2 460.8L810 472.4L794.2 477.4zM756.9 472.7L777.5 474.2L758.9 489.1z"/>
<path fill="#9f9f9f" d="M857.5 217.3L861 237.9L845.8 238.4zM857.2 253L858.6 268.9L844.8 270.5zM620.8 286.9L620.4 305.3L605.5 302.4zM879 285.3L896.8 286.1L875.5 305.9zM607.8 373.3L621.6 387.6L606.4 391.8zM640.8 406.2L658.8 421.1L639.8 422.8zM639.8 422.8L658.8 421.1L638 438.1zM794.9 424.9L789.4 442.4L777.3 441.1zM861.5 421.5L875 421.9L876.4 441.5zM655.5 460L657.5 474.5L640.8 476.7zM755.1 456.4L756.9 472.7L740.6 477.7zM826.4 458.9L845.2 458.1L843.5 477.1zM671.3 472.2L674.1 491.8L657.1 493.6zM671.3 472.2L693 491.6L674.1 491.8zM726.1 474.1L740.6 477.7L725.9 489.3zM740.6 477.7L756.9 472.7L758.9 489.1z"/>
<path fill="#a2a2a2" d="M670.9 203.5L690.4 203L690.7 219.1zM622 253.7L623.3 272.6L605.3 269.7zM589.8 324.8L606.2 336.6L587.5 339.9zM876.5 337.4L896.9 354.2L879.1 353.1zM892 337.8L912.2 338.5L896.9 354.2zM621.6 387.6L640.8 406.2L622.8 408.7zM841.7 408.6L843.6 423.7L828.6 424.7zM755 425.3L777.3 441.1L760.1 438.3zM638 438.1L656.8 443.6L655.5 460zM671.9 442.7L675.8 457.3L655.5 460zM655.5 460L675.8 457.3L671.3 472.2zM655.5 460L671.3 472.2L657.5 474.5zM675.8 457.3L688.2 460.4L671.3 472.2zM755.1 456.4L777.5 474.2L756.9 472.7zM790.2 460.8L809.2 456.9L810 472.4z"/>
<path fill="#a5a5a5" d="M725.2 187.7L726.7 202L705 203zM759.8 186.1L773.7 186.3L774.3 200.6zM826.9 185L823.3 200.5L811.7 203.4zM841.3 204.4L843.6 221.7L828.1 219.5zM809.9 238.4L826 254.6L810.9 254.2zM622 253.7L637.1 269.3L623.3 272.6zM875.3 255.9L893.7 252.9L874.8 271.8zM844.8 270.5L858.6 268.9L857.5 285.5zM602.7 289.7L620.8 286.9L605.5 302.4zM896.8 286.1L895.6 306.1L875.5 305.9zM606.2 319.6L622 320.7L606.2 336.6zM879.1 353.1L896.9 354.2L875.9 371.4zM655.8 404.3L675.3 404.6L658.8 421.1zM828.6 424.7L826.7 438.7L808.2 441.2zM671.9 442.7L688.2 460.4L675.8 457.3zM688.2 460.4L705.9 477.6L687.8 476.6zM790.2 460.8L794.2 477.4L777.5 474.2zM740.6 477.7L758.9 489.1L743.9 493.7z"/>
<path fill="#a8a8a8" d="M688.9 188.8L704.4 185.7L705 203zM725.2 187.7L739.5 184.3L741.2 206zM739.5 184.3L759.8 186.1L741.2 206zM759.8 186.1L774.3 200.6L759.2 201.3zM792.8 185.5L794.2 204.5L774.3 200.6zM792.8 185.5L810 184.9L811.7 203.4zM670.9 203.5L674.2 218.6L653.5 221.1zM845.8 238.4L857.2 253L844.7 255.5zM861 237.9L875.7 235L857.2 253zM641.5 254.9L655.4 253.8L637.1 269.3zM692.5 255L707.7 271.1L687.7 269.7zM605.5 302.4L622 320.7L606.2 319.6zM875.5 305.9L879.7 320.7L860 320.9zM606.2 336.6L621 354.9L603.8 357.5zM670.7 337.1L670.9 356.4L657.2 356.2zM773.3 373.2L791.1 375.9L790.1 389.1zM875.9 371.4L895.7 370.8L891.3 391zM841.3 392.2L861.7 387.6L841.7 408.6zM690.5 426.5L708.1 426.4L707.8 443.6zM755 425.3L760.1 438.3L738.9 439.5zM671.9 442.7L689.8 439.7L688.2 460.4zM777.3 441.1L790.2 460.8L775.2 456.6zM789.4 442.4L808.2 441.2L790.2 460.8zM808.2 441.2L826.7 438.7L826.4 458.9zM843.6 439.4L845.2 458.1L826.4 458.9zM843.6 439.4L857.9 459.4L845.2 458.1zM671.3 472.2L687.8 476.6L693 491.6zM687.8 476.6L705.9 477.6L693 491.6z"/>
<path fill="#ababab" d="M759.8 186.1L759.2 201.3L741.2 206zM670.9 203.5L690.7 219.1L674.2 218.6zM653.5 221.1L658.1 237.3L636.9 239.7zM789.2 218.4L809.2 219.5L809.9 238.4zM809.2 219.5L828.1 219.5L809.9 238.4zM828.1 219.5L843.6 221.7L845.8 238.4zM809.9 238.4L827.1 239.2L826 254.6zM857.2 253L874.8 271.8L858.6 268.9zM622 320.7L638 340.5L624.8 339.1zM860 320.9L876.5 337.4L857.2 341.5zM840.5 336.1L859.4 357.6L840.3 355.5zM857.2 341.5L876.5 337.4L859.4 357.6zM621 354.9L640.6 372.9L621.7 371.8zM840.3 355.5L859.4 357.6L842.6 372.2zM875.9 371.4L877.4 389.7L861.7 387.6zM776 391.8L790.1 389.1L774.3 404.4zM861.7 387.6L877.4 389.7L877.9 407.1zM774.5 426.9L794.9 424.9L777.3 441.1zM794.9 424.9L808.2 441.2L789.4 442.4zM861.5 421.5L876.4 441.5L860.2 440.6zM689.8 439.7L707.8 443.6L688.2 460.4zM707.8 443.6L707.1 455.5L688.2 460.4zM707.8 443.6L722.1 458.9L707.1 455.5zM777.3 441.1L789.4 442.4L790.2 460.8zM826.7 438.7L843.6 439.4L826.4 458.9zM843.6 439.4L860.2 440.6L857.9 459.4z"/>
<path fill="#aeaeae" d="M725.2 187.7L741.2 206L726.7 202zM811.7 203.4L809.2 219.5L789.2 218.4zM823.3 200.5L841.3 204.4L828.1 219.5zM653.5 221.1L674.2 218.6L671.9 237.2zM690.7 219.1L707.9 238.1L691.1 239.9zM636.9 239.7L641.5 254.9L622 253.7zM605.3 269.7L620.8 286.9L602.7 289.7zM623.3 272.6L637.1 269.3L620.8 286.9zM858.6 268.9L874.8 271.8L857.5 285.5zM675 302.2L673.3 321.7L656.8 324zM860 320.9L879.7 320.7L876.5 337.4zM606.2 336.6L624.8 339.1L621 354.9zM621 354.9L621.7 371.8L607.8 373.3zM621 354.9L636.7 354.2L640.6 372.9zM657.2 356.2L676 371L656.5 370.9zM858.7 371.2L875.9 371.4L861.7 387.6zM640.5 391.5L656.5 388.7L640.8 406.2zM656.5 388.7L655.8 404.3L640.8 406.2zM841.7 408.6L861.5 421.5L843.6 423.7zM859.2 409.6L877.9 407.1L861.5 421.5zM708.1 426.4L724.6 422.5L707.8 443.6zM794.9 424.9L809 423.1L808.2 441.2zM828.6 424.7L843.6 423.7L843.6 439.4zM656.8 443.6L671.9 442.7L655.5 460zM738.9 439.5L743.3 455L722.1 458.9zM738.9 439.5L755.1 456.4L743.3 455zM688.2 460.4L707.1 455.5L705.9 477.6zM707.1 455.5L722.1 458.9L705.9 477.6z"/>
<path fill="#b1b1b1" d="M704.4 185.7L725.2 187.7L705 203zM653.5 221.1L671.9 237.2L658.1 237.3zM658.1 237.3L671.9 237.2L655.4 253.8zM622 253.7L641.5 254.9L637.1 269.3zM826 254.6L844.8 270.5L825.6 269.8zM844.7 255.5L857.2 253L844.8 270.5zM827.6 336.4L840.5 336.1L826.6 358.2zM621.7 371.8L640.6 372.9L621.6 387.6zM640.6 372.9L656.5 388.7L640.5 391.5zM656.5 388.7L675.3 404.6L655.8 404.3zM658.8 421.1L673.2 424L671.9 442.7zM809 423.1L828.6 424.7L808.2 441.2zM861.5 421.5L860.2 440.6L843.6 439.4zM777.3 441.1L775.2 456.6L755.1 456.4z"/>
<path fill="#b4b4b4" d="M741.2 206L759.2 201.3L758.2 221.2zM759.2 201.3L774.3 200.6L758.2 221.2zM811.7 203.4L828.1 219.5L809.2 219.5zM636.9 239.7L658.1 237.3L655.4 253.8zM637.1 269.3L637 289.8L620.8 286.9zM620.8 286.9L637 289.8L639.3 304.5zM637 289.8L654.3 289.8L639.3 304.5zM875.5 305.9L895.6 306.1L895.1 320.2zM624.8 339.1L638 340.5L621 354.9zM638 340.5L636.7 354.2L621 354.9zM657.2 356.2L656.5 370.9L640.6 372.9zM826.6 358.2L840.3 355.5L842.6 372.2zM859.4 357.6L875.9 371.4L858.7 371.2zM842.6 372.2L861.7 387.6L841.3 392.2zM877.4 389.7L891.3 391L877.9 407.1zM841.7 408.6L859.2 409.6L861.5 421.5zM755 425.3L774.5 426.9L777.3 441.1zM843.6 423.7L861.5 421.5L843.6 439.4zM738.9 439.5L760.1 438.3L755.1 456.4z"/>
<path fill="#b7b7b7" d="M690.4 203L705 203L690.7 219.1zM741.2 206L758.2 221.2L739.6 219.7zM739.6 219.7L758.2 221.2L742.8 236.9zM636.9 239.7L655.4 253.8L641.5 254.9zM793.6 255.3L809.7 271.2L789.1 269zM637.1 269.3L654.3 289.8L637 289.8zM654.7 273.2L670.2 271.9L654.3 289.8zM825.6 269.8L844.8 270.5L828.2 290.2zM828.2 290.2L844.2 305.3L827.5 303zM622 320.7L624.8 339.1L606.2 336.6zM879.7 320.7L895.1 320.2L876.5 337.4zM859.4 357.6L879.1 353.1L875.9 371.4zM640.6 372.9L640.5 391.5L621.6 387.6zM656.5 370.9L676 371L656.5 388.7zM808.1 373.7L808.3 390.4L790.1 389.1zM875.9 371.4L891.3 391L877.4 389.7zM741.2 409.6L755 425.3L740.9 426.7zM808.9 406.7L828.6 424.7L809 423.1zM828.7 405.4L841.7 408.6L828.6 424.7zM658.8 421.1L656.8 443.6L638 438.1zM658.8 421.1L671.9 442.7L656.8 443.6z"/>
<path fill="#bababa" d="M726.7 202L741.2 206L722.4 221.1zM741.2 206L739.6 219.7L722.4 221.1zM827.1 239.2L845.8 238.4L826 254.6zM654.3 289.8L653.5 303.9L639.3 304.5zM857.5 285.5L859.3 304.5L844.2 305.3zM857.5 285.5L875.5 305.9L859.3 304.5zM840.5 336.1L857.2 341.5L859.4 357.6zM876.5 337.4L879.1 353.1L859.4 357.6zM636.7 354.2L657.2 356.2L640.6 372.9zM896.9 354.2L895.7 370.8L875.9 371.4zM676 371L674.9 392.5L656.5 388.7zM676 371L689.5 392.9L674.9 392.5zM791.1 375.9L808.1 373.7L790.1 389.1zM861.7 387.6L859.2 409.6L841.7 408.6zM673.2 424L690.5 426.5L671.9 442.7zM690.5 426.5L689.8 439.7L671.9 442.7zM690.5 426.5L707.8 443.6L689.8 439.7z"/>
<path fill="#bdbdbd" d="M705 203L726.7 202L722.4 221.1zM705 203L722.4 221.1L704.2 220.2zM794.2 204.5L811.7 203.4L789.2 218.4zM674.2 218.6L690.7 219.1L671.9 237.2zM722.4 221.1L742.8 236.9L726.5 237.7zM789.2 218.4L809.9 238.4L792.4 236.8zM828.1 219.5L845.8 238.4L827.1 239.2zM707.9 238.1L723.3 254L708.2 253.5zM845.8 238.4L844.7 255.5L826 254.6zM759.9 252.9L773.3 270.1L756.5 268.7zM874.8 271.8L879 285.3L857.5 285.5zM620.8 286.9L639.3 304.5L620.4 305.3zM639.3 304.5L656.8 324L639.1 321.5zM741.4 303.8L742.5 324.1L721 323.2zM844.2 305.3L860 320.9L845 320.5zM875.5 305.9L895.1 320.2L879.7 320.7zM639.1 321.5L656.8 324L638 340.5zM828.9 319L845 320.5L840.5 336.1zM828.9 319L840.5 336.1L827.6 336.4zM845 320.5L860 320.9L840.5 336.1zM860 320.9L857.2 341.5L840.5 336.1zM638 340.5L655 340.7L657.2 356.2zM670.7 337.1L687.2 355.4L670.9 356.4zM607.8 373.3L621.7 371.8L621.6 387.6zM773.3 373.2L776 391.8L759.2 389.2zM773.3 373.2L790.1 389.1L776 391.8zM808.1 373.7L828.5 370.6L827.5 388.6zM774.3 404.4L794.9 424.9L774.5 426.9zM808.9 406.7L809 423.1L794.9 424.9zM707.8 443.6L724.6 442.5L722.1 458.9zM760.1 438.3L777.3 441.1L755.1 456.4z"/>
<path fill="#c0c0c0" d="M722.4 221.1L739.6 219.7L742.8 236.9zM671.9 237.2L673.8 252.8L655.4 253.8zM792.4 236.8L809.9 238.4L793.6 255.3zM692.5 255L687.7 269.7L670.2 271.9zM826 254.6L844.7 255.5L844.8 270.5zM637.1 269.3L654.7 273.2L654.3 289.8zM809.7 271.2L828.2 290.2L807.6 285zM844.8 270.5L857.5 285.5L844.8 286.4zM691.4 289.7L708.9 290.1L704.7 304.3zM791.5 285.6L807.6 285L810.9 303.5zM791.5 285.6L810.9 303.5L789.9 305.4zM807.6 285L828.2 290.2L810.9 303.5zM639.3 304.5L653.5 303.9L656.8 324zM789.9 305.4L810.9 303.5L789.3 319zM844.2 305.3L845 320.5L828.9 319zM859.3 304.5L875.5 305.9L860 320.9zM842.6 372.2L858.7 371.2L861.7 387.6zM759.2 389.2L759.7 407.9L741.2 409.6zM827.5 388.6L841.3 392.2L841.7 408.6zM827.5 388.6L841.7 408.6L828.7 405.4zM675.3 404.6L673.2 424L658.8 421.1zM741.2 409.6L740.9 426.7L724.6 422.5zM740.9 426.7L755 425.3L738.9 439.5zM724.6 442.5L738.9 439.5L722.1 458.9z"/>
<path fill="#c3c3c3" d="M722.4 221.1L726.5 237.7L707.9 238.1zM655.4 253.8L670.2 271.9L654.7 273.2zM810.9 303.5L827.5 303L828.9 319zM670.9 356.4L687.2 355.4L676 371zM807.5 356.6L826.6 358.2L808.1 373.7zM859.4 357.6L858.7 371.2L842.6 372.2zM828.5 370.6L842.6 372.2L827.5 388.6zM621.6 387.6L640.5 391.5L640.8 406.2zM674.9 392.5L689.5 392.9L675.3 404.6zM759.2 389.2L776 391.8L774.3 404.4zM790.1 389.1L808.3 390.4L808.9 406.7zM793.3 409.2L808.9 406.7L794.9 424.9zM808.9 406.7L828.7 405.4L828.6 424.7zM724.6 422.5L724.6 442.5L707.8 443.6zM724.6 422.5L738.9 439.5L724.6 442.5z"/>
<path fill="#c6c6c6" d="M774.3 200.6L794.2 204.5L789.2 218.4zM707.9 238.1L726.5 237.7L723.3 254zM759.9 252.9L756.5 268.7L742.1 273zM826 254.6L825.6 269.8L809.7 271.2zM670.2 271.9L687.7 269.7L691.4 289.7zM809.7 271.2L807.6 285L791.5 285.6zM809.7 271.2L825.6 269.8L828.2 290.2zM857.5 285.5L879 285.3L875.5 305.9zM844.2 305.3L859.3 304.5L860 320.9zM622 320.7L639.1 321.5L638 340.5zM656.8 324L673.3 321.7L670.7 337.1zM673.3 321.7L688.7 322L670.7 337.1zM638 340.5L657.2 356.2L636.7 354.2zM670.7 337.1L692.3 339.3L687.2 355.4zM758.2 359L773.3 373.2L760.3 373.1zM826.6 358.2L842.6 372.2L828.5 370.6zM640.6 372.9L656.5 370.9L656.5 388.7zM708 375.7L724.5 389L704 388.7zM689.5 392.9L687.1 407L675.3 404.6zM827.5 388.6L828.7 405.4L808.9 406.7zM709.6 407.7L708.1 426.4L690.5 426.5zM724.6 422.5L740.9 426.7L738.9 439.5z"/>
<path fill="#c9c9c9" d="M774.3 200.6L774.5 221.3L758.2 221.2zM774.3 200.6L789.2 218.4L774.5 221.3zM690.7 219.1L691.1 239.9L671.9 237.2zM704.2 220.2L722.4 221.1L707.9 238.1zM707.9 238.1L708.2 253.5L692.5 255zM742.8 236.9L742.1 251.7L723.3 254zM809.9 238.4L810.9 254.2L793.6 255.3zM655.4 253.8L673.8 252.8L670.2 271.9zM723.3 254L725.2 270.9L707.7 271.1zM756.5 268.7L773.3 270.1L759.3 290.8zM844.8 270.5L844.8 286.4L828.2 290.2zM844.8 286.4L857.5 285.5L844.2 305.3zM620.4 305.3L639.3 304.5L622 320.7zM656.8 324L655 340.7L638 340.5zM688.7 322L692.3 339.3L670.7 337.1zM757.3 319.4L757.4 336.3L741.5 337.1zM773.1 324.6L789.3 319L772.4 336.7zM809.7 338.9L827.6 336.4L826.6 358.2zM809.7 338.9L826.6 358.2L807.5 356.6zM840.5 336.1L840.3 355.5L826.6 358.2zM724.9 357.2L738.6 371L724 371.4zM791.3 357.5L807.5 356.6L808.1 373.7zM791.3 357.5L808.1 373.7L791.1 375.9zM708 375.7L704 388.7L689.5 392.9zM723.6 409L741.2 409.6L724.6 422.5zM741.2 409.6L759.7 407.9L755 425.3zM774.3 404.4L793.3 409.2L794.9 424.9z"/>
<path fill="#cccccc" d="M690.7 219.1L704.2 220.2L707.9 238.1zM758.2 221.2L774.9 238.1L755.4 235zM671.9 237.2L691.1 239.9L692.5 255zM742.8 236.9L759.9 252.9L742.1 251.7zM810.9 254.2L826 254.6L809.7 271.2zM742.1 273L756.5 268.7L759.3 290.8zM773.3 270.1L776.9 288.9L759.3 290.8zM791.5 285.6L789.9 305.4L772.1 302.1zM828.2 290.2L827.5 303L810.9 303.5zM810.9 303.5L828.9 319L806.1 324.4zM721 323.2L741.5 337.1L727 336.4zM806.1 324.4L828.9 319L809.7 338.9zM792.7 340.3L809.7 338.9L791.3 357.5zM657.2 356.2L670.9 356.4L676 371zM758.2 359L760.3 373.1L738.6 371zM775.2 354.7L791.3 357.5L773.3 373.2zM808.1 373.7L827.5 388.6L808.3 390.4zM842.6 372.2L841.3 392.2L827.5 388.6zM656.5 388.7L674.9 392.5L675.3 404.6zM689.5 392.9L709.6 407.7L687.1 407zM790.1 389.1L793.3 409.2L774.3 404.4zM808.3 390.4L827.5 388.6L808.9 406.7z"/>
<path fill="#cfcfcf" d="M758.2 221.2L755.4 235L742.8 236.9zM789.2 218.4L792.4 236.8L774.9 238.1zM671.9 237.2L692.5 255L673.8 252.8zM755.4 235L774.9 238.1L759.9 252.9zM655.4 253.8L654.7 273.2L637.1 269.3zM723.3 254L742.1 251.7L742.1 273zM742.1 251.7L759.9 252.9L742.1 273zM759.9 252.9L774.8 254.1L773.3 270.1zM654.3 289.8L675 302.2L653.5 303.9zM759.3 290.8L776.9 288.9L772.1 302.1zM776.9 288.9L791.5 285.6L772.1 302.1zM828.2 290.2L844.8 286.4L844.2 305.3zM639.3 304.5L639.1 321.5L622 320.7zM675 302.2L688.7 322L673.3 321.7zM772.1 302.1L789.9 305.4L789.3 319zM772.1 302.1L789.3 319L773.1 324.6zM827.5 303L844.2 305.3L828.9 319zM721 323.2L742.5 324.1L741.5 337.1zM742.5 324.1L757.3 319.4L741.5 337.1zM828.9 319L827.6 336.4L809.7 338.9zM655 340.7L670.7 337.1L657.2 356.2zM772.4 336.7L791.3 357.5L775.2 354.7zM724.9 357.2L724 371.4L708 375.7zM676 371L690.3 370.5L689.5 392.9zM738.6 371L759.2 389.2L743.3 389.4zM760.3 373.1L773.3 373.2L759.2 389.2zM704 388.7L724.5 389L709.6 407.7zM743.3 389.4L759.2 389.2L741.2 409.6zM790.1 389.1L808.9 406.7L793.3 409.2zM759.7 407.9L774.3 404.4L755 425.3zM774.3 404.4L774.5 426.9L755 425.3z"/>
<path fill="#d2d2d2" d="M691.1 239.9L707.9 238.1L692.5 255zM726.5 237.7L742.8 236.9L723.3 254zM692.5 255L708.2 253.5L707.7 271.1zM723.3 254L742.1 273L725.2 270.9zM670.2 271.9L674.2 285.8L654.3 289.8zM687.7 269.7L707.7 271.1L691.4 289.7zM742.1 273L739.4 289L724.3 289.9zM742.1 273L759.3 290.8L739.4 289zM773.3 270.1L791.5 285.6L776.9 288.9zM789.1 269L809.7 271.2L791.5 285.6zM724.3 289.9L739.4 289L741.4 303.8zM739.4 289L759.3 290.8L741.4 303.8zM741.4 303.8L757.3 319.4L742.5 324.1zM688.7 322L705.2 319.3L705.4 339.1zM757.3 319.4L772.4 336.7L757.4 336.3zM789.3 319L809.7 338.9L792.7 340.3zM705.4 339.1L724.9 357.2L704.8 354.1zM741.5 337.1L757.4 336.3L758.2 359zM772.4 336.7L775.2 354.7L758.2 359zM687.2 355.4L690.3 370.5L676 371zM708 375.7L724 371.4L724.5 389zM724 371.4L738.6 371L724.5 389zM709.6 407.7L724.6 422.5L708.1 426.4z"/>
<path fill="#d5d5d5" d="M758.2 221.2L774.5 221.3L774.9 238.1zM774.5 221.3L789.2 218.4L774.9 238.1zM742.8 236.9L755.4 235L759.9 252.9zM774.8 254.1L793.6 255.3L773.3 270.1zM793.6 255.3L810.9 254.2L809.7 271.2zM707.7 271.1L725.2 270.9L724.3 289.9zM654.3 289.8L674.2 285.8L675 302.2zM704.7 304.3L705.2 319.3L688.7 322zM704.7 304.3L721 323.2L705.2 319.3zM810.9 303.5L806.1 324.4L789.3 319zM721 323.2L727 336.4L705.4 339.1zM757.3 319.4L773.1 324.6L772.4 336.7zM789.3 319L806.1 324.4L809.7 338.9zM692.3 339.3L705.4 339.1L687.2 355.4zM705.4 339.1L727 336.4L724.9 357.2zM727 336.4L741.5 337.1L724.9 357.2zM757.4 336.3L772.4 336.7L758.2 359zM772.4 336.7L792.7 340.3L791.3 357.5zM809.7 338.9L807.5 356.6L791.3 357.5zM687.2 355.4L708 375.7L690.3 370.5zM704.8 354.1L724.9 357.2L708 375.7zM758.2 359L775.2 354.7L773.3 373.2zM791.3 357.5L791.1 375.9L773.3 373.2zM826.6 358.2L828.5 370.6L808.1 373.7zM738.6 371L743.3 389.4L724.5 389zM738.6 371L760.3 373.1L759.2 389.2zM724.5 389L743.3 389.4L741.2 409.6zM724.5 389L741.2 409.6L723.6 409zM687.1 407L709.6 407.7L690.5 426.5zM709.6 407.7L723.6 409L724.6 422.5z"/>
<path fill="#d8d8d8" d="M774.9 238.1L774.8 254.1L759.9 252.9zM673.8 252.8L692.5 255L670.2 271.9zM707.7 271.1L708.9 290.1L691.4 289.7zM725.2 270.9L742.1 273L724.3 289.9zM773.3 270.1L789.1 269L791.5 285.6zM759.3 290.8L772.1 302.1L757.5 307.6zM653.5 303.9L675 302.2L656.8 324zM772.1 302.1L773.1 324.6L757.3 319.4zM656.8 324L670.7 337.1L655 340.7zM705.2 319.3L721 323.2L705.4 339.1zM789.3 319L792.7 340.3L772.4 336.7zM687.2 355.4L704.8 354.1L708 375.7zM724.9 357.2L741.3 354.1L738.6 371zM690.3 370.5L708 375.7L689.5 392.9zM675.3 404.6L690.5 426.5L673.2 424z"/>
<path fill="#dbdbdb" d="M774.9 238.1L792.4 236.8L793.6 255.3zM708.2 253.5L723.3 254L707.7 271.1zM793.6 255.3L789.1 269L773.3 270.1zM670.2 271.9L691.4 289.7L674.2 285.8zM707.7 271.1L724.3 289.9L708.9 290.1zM674.2 285.8L691.4 289.7L675 302.2zM691.4 289.7L704.7 304.3L688.8 302.4zM708.9 290.1L724.3 289.9L704.7 304.3zM724.3 289.9L741.4 303.8L722.5 302.3zM759.3 290.8L757.5 307.6L741.4 303.8zM688.8 302.4L704.7 304.3L688.7 322zM704.7 304.3L722.5 302.3L721 323.2zM722.5 302.3L741.4 303.8L721 323.2zM741.4 303.8L757.5 307.6L757.3 319.4zM688.7 322L705.4 339.1L692.3 339.3zM689.5 392.9L704 388.7L709.6 407.7zM724.5 389L723.6 409L709.6 407.7zM675.3 404.6L687.1 407L690.5 426.5z"/>
<path fill="#dedede" d="M774.9 238.1L793.6 255.3L774.8 254.1zM691.4 289.7L688.8 302.4L675 302.2zM724.3 289.9L722.5 302.3L704.7 304.3zM675 302.2L688.8 302.4L688.7 322zM757.5 307.6L772.1 302.1L757.3 319.4zM705.4 339.1L704.8 354.1L687.2 355.4zM741.5 337.1L741.3 354.1L724.9 357.2zM741.5 337.1L758.2 359L741.3 354.1zM741.3 354.1L758.2 359L738.6 371z"/>
<polyline points="903.0,308.0 909.0,345.0 909.0,381.0 903.0,410.0 894.0,435.0 878.0,457.0" fill="none" stroke="#808080" stroke-width="26" stroke-opacity=".28"/><polyline points="608.0,315.0 616.0,280.0 638.0,245.0 673.0,215.0 715.0,198.0 765.0,189.0 811.0,198.0 848.0,228.0 881.0,268.0 903.0,308.0" fill="none" stroke="#808080" stroke-width="30" stroke-opacity=".22"/><polyline points="604.0,335.0 607.0,375.0 616.0,408.0 632.0,437.0 650.0,462.0" fill="none" stroke="#808080" stroke-width="22" stroke-opacity=".22"/><polyline points="646.0,460.0 658.0,475.0 671.0,487.0 696.0,498.0 738.0,502.0 798.0,498.0 838.0,487.0 860.0,471.0" fill="none" stroke="#8e8e8e" stroke-width="9" stroke-opacity=".55"/><polyline points="660.0,467.0 683.0,485.0 713.0,492.0 758.0,494.0 808.0,489.0 848.0,471.0" fill="none" stroke="#909090" stroke-width="16" stroke-opacity=".35"/><polyline points="643.0,240.0 623.0,263.0 610.0,290.0 604.0,315.0 603.0,335.0 605.0,362.0 609.0,385.0 615.0,408.0 631.0,437.0 648.0,462.0" fill="none" stroke="#808080" stroke-width="8" stroke-opacity=".65"/><polyline points="811.0,196.0 828.0,210.0 848.0,228.0 865.0,248.0 881.0,268.0 895.0,288.0 903.0,308.0 909.0,322.0 909.0,365.0 905.0,398.0 896.0,432.0 881.0,455.0 858.0,472.0" fill="none" stroke="#868686" stroke-width="9" stroke-opacity=".6"/><polyline points="643.0,240.0 673.0,213.0 715.0,196.0 765.0,186.0 811.0,196.0" fill="none" stroke="#999" stroke-width="5" stroke-opacity=".5"/><polygon points="701.0,338.0 719.7,323.0 738.0,309.0 781.0,312.0 780.0,326.0 771.0,342.0 748.0,350.0 725.0,355.0" fill="#a9a9a9"/><polygon points="720.0,317.0 738.0,309.0 781.0,312.0 778.0,324.0 756.0,318.0" fill="#8d8d8d"/><polygon points="725.0,355.0 731.0,327.0 739.0,353.0 746.0,329.0 754.0,351.0" fill="#9a9a9a"/><polygon points="781.0,312.0 782.5,313.0 779.0,327.0 777.0,325.0" fill="#555"/><polygon points="778.0,325.0 795.0,340.0 811.0,352.0 828.0,366.0 858.0,383.0 841.0,381.0 824.0,372.0 806.0,359.0 791.0,346.0" fill="#858585"/><polygon points="811.0,352.0 843.0,367.0 858.0,383.0 828.0,366.0" fill="#a2a2a2"/><polyline points="688.0,337.0 681.0,360.0 673.0,378.0 665.0,393.0 656.0,403.0 648.0,415.0 640.0,428.0" fill="none" stroke="#7c7c7c" stroke-width="2"/><polyline points="684.0,308.0 683.0,325.0 688.0,337.0 691.0,343.0" fill="none" stroke="#8a8a8a" stroke-width="1.5"/><polyline points="679.0,380.0 678.0,395.0 680.0,411.0" fill="none" stroke="#8a8a8a" stroke-width="1.5"/><polygon points="688.0,337.0 701.0,338.0 674.0,367.0 670.0,383.0" fill="#9c9c9c"/><polygon points="714.0,199.0 730.0,192.0 743.0,194.0 726.0,203.0" fill="#dcdcdc"/><polygon points="718.0,204.0 743.0,196.0 788.0,195.0 828.0,211.0 798.0,207.0 768.0,202.0 738.0,205.0" fill="#9c9c9c"/><polygon points="778.0,226.0 798.0,215.0 818.0,235.0 810.0,247.0 793.0,243.0" fill="#a4a4a4"/>
</g>
<path d="M817.2 744.2L824.7 739.2L824.7 748.3z" fill="#d4d4d4"/>
<g shape-rendering="auto" fill="none"><path d="M553.2 341.1 A265.0 265.0 0 0 1 643.7 239.0" stroke="#767676" stroke-width="1" stroke-opacity=".8"/><path d="M716.7 205.3 A265.0 265.0 0 0 1 931.2 235.7" stroke="#808080" stroke-width="1.2" stroke-opacity=".8"/><path d="M574.6 614.4 A265.0 265.0 0 0 0 828.0 722.3" stroke="#767676" stroke-width="1" stroke-opacity=".8"/><line x1="798.0" y1="180.0" x2="783.3" y2="741.7" stroke="#ffb8b8" stroke-opacity=".8" stroke-width="1.6"/><line x1="878.0" y1="462.5" x2="1071.0" y2="466.8" stroke="#707070" stroke-opacity=".5" stroke-width="1"/><path d="M510.0 454.2 Q790.0 466.0 1071.0 468.0" stroke="#b4f0b4" stroke-opacity=".78" stroke-width="1.2"/></g>
</svg>
<!--/MESH-->
<div id="info">
<div style="left:156px;top:3px">FOV: 60</div>
<div style="left:156px;top:18px">FPS:&nbsp;&nbsp; 555.6</div>
<div style="left:156px;top:33px">BO_RENDERING</div>
<div style="left:790px;top:3px">Current Mesh: pointcloud</div>
<div style="left:790px;top:18px">Vertices: 1,002&nbsp;&nbsp;&nbsp; (27,978)</div>
<div style="left:790px;top:33px">Faces: 0&nbsp;&nbsp;&nbsp; (8,992)</div>
<div style="left:790px;top:48px">Selection: v: 0 f: 0</div>
</div>
</div>
<div id="status"></div><div id="vpbot"></div>
<!--DOCK-->
<style>
#dock *{position:absolute}
#dock .t11{font-size:11px;line-height:13px;white-space:nowrap;margin-top:1px}
#dock .b{font-weight:bold}
#dock .nb{width:21px;height:18px;top:517px;background:#e1e1e1;border:1px solid #adadad;font-weight:bold;font-size:12px;line-height:16px;padding-top:1px;text-align:center}
#dock .tab{top:567px;height:22px;background:#f0f0f0;border:1px solid #d9d9d9;border-bottom:none}
#log{left:1598px;top:803px;width:313px;height:198px;background:#fff;border:1px solid #7a7a7a}
#logtxt{left:5px;top:1px;font-family:"Liberation Mono",monospace;font-size:13.33px;line-height:13px;color:#6e6e6e;white-space:pre}
</style>
<div id="dock" style="position:absolute;left:0;top:0;width:0;height:0">
<svg width="0" height="0" style="left:0;top:0"><defs>
<g id="icRed"><path d="M.5 3.5H9.5V14.5H.5Z M.5 3.5L3 .5H12L9.5 3.5 M12 .5V11.5L9.5 14.5" fill="none" stroke="#865" stroke-width=".7"/><path d="M3.2 .6L10.5 .6L5.2 14.4L.6 12.8L5.5 4.2L2.2 3.4Z"/></g>
<g id="icGreen"><path d="M2 3.2Q1 1 3.8 .9Q7 .2 10 .9Q13.2 1 12.5 3.6Q14 7 12.8 10.5Q12.5 13.5 9.8 13L7.2 11.5L4.8 13.2Q1.6 13.6 1.6 10.5Q.2 7 2 3.2Z" fill="none" stroke="#3c3c3c" stroke-width="2.500" stroke-dasharray="1.200 .500"/><path d="M2 3.2Q1 1 3.8 .9Q7 .2 10 .9Q13.2 1 12.5 3.6Q14 7 12.8 10.5Q12.5 13.5 9.8 13L7.2 11.5L4.8 13.2Q1.6 13.6 1.6 10.5Q.2 7 2 3.2Z" fill="none" stroke="#bbb" stroke-width=".7" stroke-dasharray=".8 1.2"/><path d="M4 4L5.8 3.4L6.4 5H8L8.6 3.4L10.4 4Q11.3 7 10.5 9.8L9 10.6L7.2 9L5.4 10.6L3.8 9.8Q3 7 4 4Z" fill="none" stroke="#4e6" stroke-width=".9"/></g>
<g id="icWireS" fill="none" stroke-width="1"><ellipse cx="9" cy="3" rx="8" ry="2.600"/><ellipse cx="9" cy="19" rx="8" ry="2.600"/><path d="M1 3V19M17 3V19M5 1V21M13 1V21M1 3L13 21M17 3L5 21M5 5.400L13 16.600M13 5.400L5 16.600"/></g><g id="chev"><path d="M.8 .8L5 5L.8 9.2" fill="none" stroke="#a6a6a6" stroke-width="1.5"/></g>
</defs></svg>
<!-- dock title -->
<div style="left:1589px;top:84px;width:330px;height:18px;background:#d9d9d9;border:1px solid #c3c3c3"></div>
<div style="left:1594px;top:87px;font-size:12px;line-height:15px;white-space:nowrap;letter-spacing:-.33px">Project_1</div>
<svg width="34" height="12" viewBox="0 0 34 12" style="left:1881px;top:87px"><g fill="none" stroke="#1a1a1a"><rect x="4.5" y="2" width="5" height="4.5" stroke-width="1"/><path d="M4 2.2H10" stroke-width="1.6"/><rect x="2.5" y="5" width="5" height="4.5" fill="#d9d9d9" stroke-width="1"/><path d="M2 5.2H8" stroke-width="1.6"/><path d="M24 2.5L30.5 9M30.5 2.5L24 9" stroke-width="1.7"/></g></svg>
<!-- tree -->
<div style="left:1598px;top:113px;width:313px;height:397px;background:#fff;border:1px solid #7a7a7a"></div>
<div style="left:1609px;top:140px;width:29px;height:26px;background:#d9d9d9"></div>
<div style="left:1638px;top:140px;width:272px;height:26px;background:#dcdc00"></div>
<div style="left:1812px;top:116px;width:23px;height:21px;background:#cde6fa;border:1px solid #99d1ff"></div>
<div style="left:1835px;top:116px;width:23px;height:21px;background:#cde6fa;border:1px solid #99d1ff"></div>
<div style="left:1858px;top:116px;width:23px;height:21px;background:#cde6fa;border:1px solid #99d1ff"></div>
<div style="left:1766px;top:142px;width:23px;height:21px;background:#aac832;border:1px solid #78b46e"></div>
<div style="left:1835px;top:142px;width:23px;height:21px;background:#aac832;border:1px solid #78b46e"></div>
<div style="left:1858px;top:142px;width:23px;height:21px;background:#aac832;border:1px solid #78b46e"></div>
<div style="left:1612px;top:119px;width:16px;height:16px;background:#e1e1e1;border:1px solid #c4c4c4"></div>
<div style="left:1612px;top:145px;width:16px;height:16px;background:#a4c4e2;border:1px solid #8fb0d0"></div>
<svg width="320" height="60" viewBox="1598 110 320 60" style="left:1598px;top:110px">
<use href="#chev" x="1601" y="122"/><use href="#chev" x="1601" y="148"/>
<path d="M1613 127Q1620 121.5 1627 126Q1621 132 1613 127Z" fill="#fff" stroke="#999" stroke-width=".5"/><circle cx="1620" cy="126.6" r="3.3" fill="#0e0"/><circle cx="1619.5" cy="126" r="1.5" fill="#000"/><circle cx="1620.6" cy="125.4" r=".6" fill="#fff"/><path d="M1613 126.5Q1620 120.5 1627 125.5" fill="none" stroke="#666" stroke-width=".6"/>
<path d="M1614 155.5Q1621 158 1627 150.5" fill="none" stroke="#345" stroke-width="1"/><path d="M1615 156.5L1614.5 158M1617.5 157L1617.3 158.6M1620 156.8L1620.3 158.3M1622.5 155.6L1623.2 157" stroke="#456" stroke-width=".5"/>
<!-- row0 icons -->
<g transform="translate(1746 120.5) scale(.7)"><use href="#icCube" stroke="#666"/></g>
<g transform="translate(1769 121) scale(.78 .7)"><use href="#icDots" fill="#222"/></g>
<g transform="translate(1793.5 120.5) scale(.72 .68)"><use href="#icWireS" stroke="#222"/></g>
<g transform="translate(1818 121.5) scale(.72 .66)"><use href="#icCyl"/></g>
<g transform="translate(1841 120.5)"><use href="#icRed" fill="#f06878"/></g>
<g transform="translate(1863 121)"><use href="#icGreen"/></g>
<!-- row1 icons -->
<g transform="translate(1746 146.5) scale(.7)"><use href="#icCube" stroke="#6a6a00"/></g>
<g transform="translate(1770 147) scale(.78 .7)"><use href="#icDots" fill="#222"/></g>
<g transform="translate(1793.5 146.5) scale(.72 .68)"><use href="#icWireS" stroke="#2a2a00"/></g>
<g transform="translate(1817 146) scale(.7 .68)"><use href="#icCyl"/></g>
<g transform="translate(1841 146.5)"><use href="#icRed" fill="#e86010"/></g>
<g transform="translate(1863 147)"><use href="#icGreen"/></g>
</svg>
<div style="left:1641px;top:121px;font-size:12px;line-height:15px">0</div>
<div style="left:1680px;top:121px;font-size:12px;line-height:15px;white-space:nowrap">hoppe *</div>
<div style="left:1641px;top:147px;font-size:12px;line-height:15px;color:#1a00d0">1</div>
<div style="left:1680px;top:147px;font-size:12px;line-height:15px;color:#1a00d0;white-space:nowrap;letter-spacing:.3px">pointcloud</div>
<!-- number buttons -->
<div class="nb" style="left:1599px">1</div><div class="nb" style="left:1628px">2</div><div class="nb" style="left:1657px">3</div><div class="nb" style="left:1686px">4</div>
<div class="nb" style="left:1802px">1</div><div class="nb" style="left:1831px">2</div><div class="nb" style="left:1860px">3</div><div class="nb" style="left:1889px">4</div>
<!-- group box -->
<div style="left:1598px;top:548px;width:313px;height:236px;border:1px solid #dcdcdc"></div>
<div class="t11" style="left:1604px;top:542px;background:#f0f0f0;padding:0 3px 0 2px">pointcloud.off</div>
<!-- tabs -->
<div class="tab" style="left:1610px;width:41px"></div>
<div class="tab" style="left:1697px;width:43px"></div>
<div class="tab" style="left:1739px;width:45px"></div>
<div class="tab" style="left:1783px;width:45px"></div>
<div class="tab" style="left:1827px;width:43px"></div>
<div style="left:1608px;top:589px;width:291px;height:162px;border:1px solid #fdfdfd;outline:1px solid #e3e3e3;outline-offset:-2px;background:#f0f0f0"></div>
<div style="left:1650px;top:565px;width:48px;height:24px;background:#fff;border:1px solid #d9d9d9;border-bottom:none"></div>
<svg width="300" height="30" viewBox="1600 562 300 30" style="left:1600px;top:562px">
<g transform="translate(1620.5 570) scale(.66)"><use href="#icCube" stroke="#666"/></g>
<g transform="translate(1665 569) scale(.72 .62)"><use href="#icDots" fill="#222"/></g>
<g transform="translate(1710 570) scale(.68 .64)"><use href="#icWireS" stroke="#222"/></g>
<g transform="translate(1754 570) scale(.7 .66)"><use href="#icCyl"/></g>
<g transform="translate(1798 570) scale(.96)"><use href="#icRed" fill="#f4747e"/></g>
<g transform="translate(1841 570)"><use href="#icGreen"/></g>
</svg>
<!-- controls -->
<div class="t11 b" style="left:1619px;top:604px">Shading</div>
<div class="t11" style="left:1739px;top:604px">Vert</div>
<div style="left:1767px;top:601px;width:81px;height:18px;background:#c5def5;border:1px solid #90c8f6"></div>
<div class="t11" style="left:1773px;top:605px">Dot Decorator</div>
<div class="t11" style="left:1853px;top:604px">None</div>
<div class="t11 b" style="left:1619px;top:633px">Color</div>
<div class="t11" style="left:1739px;top:633px">Mesh</div>
<div style="left:1772px;top:630px;width:56px;height:18px;background:#c5def5;border:1px solid #90c8f6"></div>
<div class="t11" style="left:1778px;top:634px">User-Def</div>
<div style="left:1828px;top:632px;width:15px;height:15px;background:#fff"></div>
<div class="t11 b" style="left:1619px;top:701px">Point Size</div>
<div style="left:1768px;top:704px;width:84px;height:4px;background:#e7eaea;border:1px solid #d6d6d6"></div>
<div style="left:1789px;top:696px;width:10px;height:21px;background:#0078d7"></div>
<div class="t11" style="left:1766px;top:760px;letter-spacing:-.1px">apply to all visible layers</div>
<div style="left:1888px;top:760px;width:13px;height:13px;background:#fff;border:1px solid #333"></div>
<!-- log -->
<div id="log">
<div id="logtxt">3dscan_ws2021/exercise_2_src/data/
pointcloud.off in 15 msec
All files opened in 15 msec
Opened mesh E:/TMP/3dScanEx2/
result.off in 67 msec
All files opened in 68 msec
Opened mesh E:/TMP/3dScanEx2/
sphere.off in 67 msec
All files opened in 68 msec
Applied filter Delete Current Mesh
in 61 msec
Applied filter Delete Current Mesh
in 45 msec</div>
<div style="left:294px;top:0;width:17px;height:196px;background:#f0f0f0"></div>
<div style="left:294px;top:53px;width:17px;height:126px;background:#cdcdcd"></div>
<svg width="17" height="196" viewBox="0 0 17 196" style="left:294px;top:0"><g fill="none" stroke="#505050" stroke-width="1.6"><path d="M5 11L8.5 7.5L12 11"/><path d="M5 185L8.5 188.5L12 185"/></g></svg>
</div>
<!-- status -->
<div style="left:808px;top:1014px;width:771px;height:23px;background:#e6e6e6;border:1px solid #bcbcbc"></div>
<div style="left:1614px;top:1013px;width:1px;height:24px;background:#d0d0d0"></div>
<div style="left:1619px;top:1013px;width:300px;height:25px;background:#cccccc;border:2px solid #8a8a8a;border-top-color:#828282;border-left-color:#828282"></div>
<div style="left:1621px;top:1015px;width:161px;height:21px;background:#7fc27f"></div>
<div class="t11" style="left:1619px;top:1019px;width:300px;text-align:center">Mem 54% 4470/8192 MB</div>
<!-- MDI buttons -->
<svg width="60" height="20" viewBox="1862 23 60 20" style="left:1862px;top:23px"><g fill="#fff" stroke="#e2e2e2"><rect x="1866.5" y="24.5" width="16" height="17"/><rect x="1884.5" y="24.5" width="16" height="17"/><rect x="1902.5" y="24.5" width="16" height="17"/></g><g fill="none" stroke="#5f6b80"><path d="M1871 36.500H1877" stroke-width="1.800"/><rect x="1891.500" y="30" width="5" height="4.500" stroke-width="1"/><path d="M1891 30.300H1897" stroke-width="1.600"/><rect x="1889.500" y="33" width="5" height="4" fill="#fff" stroke-width="1"/><path d="M1889 33.300H1895" stroke-width="1.600"/><path d="M1908.500 30.500L1914.500 36.500M1914.500 30.500L1908.500 36.500" stroke-width="2"/></g></svg>
<!-- window controls -->
<svg width="140" height="23" viewBox="1780 0 140 23" style="left:1780px;top:0"><g fill="none" stroke="#000" stroke-width="1"><path d="M1799 10.500H1809"/><rect x="1844.500" y="7.500" width="7" height="7"/><path d="M1846.500 7.500V5.500H1853.500V12.500H1851.500"/><path d="M1890 5L1900 15M1900 5L1890 15" stroke-width="1.100"/></g></svg>
<!-- app icons -->
<svg width="20" height="44" viewBox="0 0 20 44" style="left:0;top:0"><defs><radialGradient id="gEye" cx=".35" cy=".3" r=".8"><stop offset="0" stop-color="#f4f4f4"/><stop offset=".6" stop-color="#a8a8a8"/><stop offset="1" stop-color="#555"/></radialGradient>
<g id="eyeIc"><circle cx="7.500" cy="7.500" r="7.500" fill="url(#gEye)"/><path d="M3 8.500Q6.500 4.500 12.500 6L14.500 4.500Q15.500 8 13.500 10.500Q8 12.500 3 8.500Z" fill="#222"/><path d="M5.500 8.300Q8 6.300 11.500 7.200Q11.500 9.500 9 10Q7 10 5.500 8.300Z" fill="#7c7"/><circle cx="9.500" cy="7.800" r="1" fill="#dfd"/></g></defs>
<use href="#eyeIc" x="3" y="3.500"/><g transform="translate(1.500 26.500) scale(.96)"><use href="#eyeIc"/></g></svg>
<!-- cursor -->
<svg width="9" height="19" viewBox="0 0 9 19" style="left:1085px;top:379px"><path d="M1.500 1.500H3.500Q4.500 1.500 4.500 2.500Q4.500 1.500 5.500 1.500H7.500M4.500 2.500V16.500M1.500 17.500H3.500Q4.500 17.500 4.500 16.500Q4.500 17.500 5.500 17.500H7.500" fill="none" stroke="#e8e0c0" stroke-width="1"/></svg>
</div>

<!--/DOCK-->
</body>
</html>
